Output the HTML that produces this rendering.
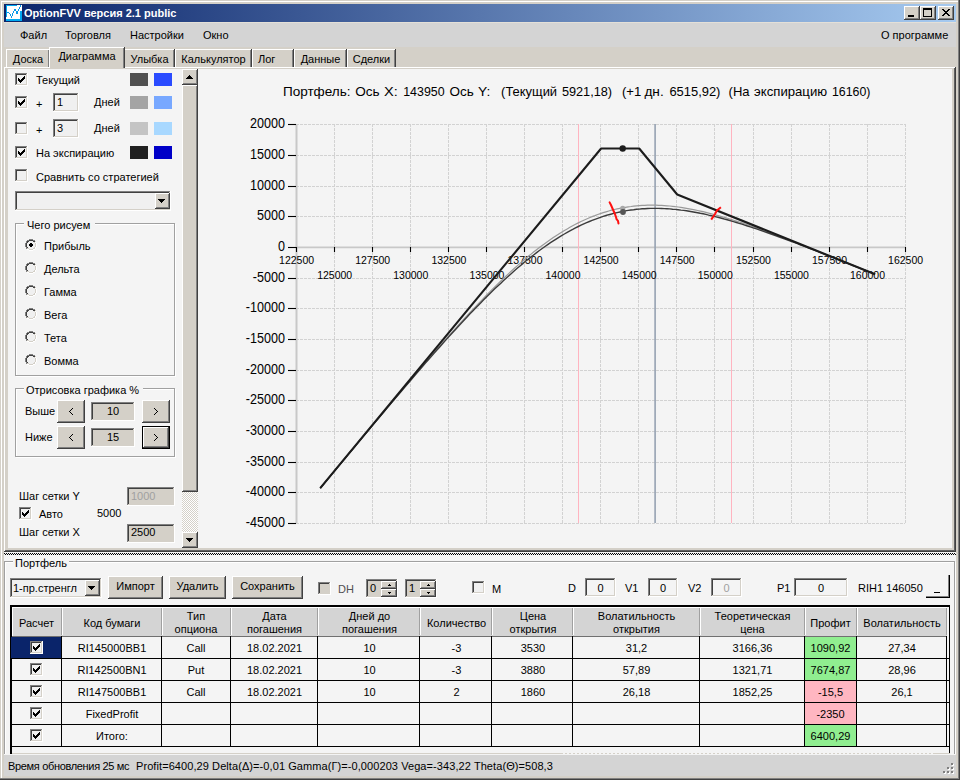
<!DOCTYPE html>
<html><head><meta charset="utf-8">
<style>
*{margin:0;padding:0;box-sizing:border-box}
html,body{width:960px;height:780px;overflow:hidden;background:#d4d0c8}
body{position:relative;font-family:"Liberation Sans",sans-serif;font-size:11px;color:#000;line-height:13px}
.a{position:absolute}
.t{position:absolute;white-space:nowrap}
.raised{background:#d4d0c8;box-shadow:inset -1px -1px #404040,inset 1px 1px #fff,inset -2px -2px #808080,inset 2px 2px #d4d0c8}
.sunken{box-shadow:inset -1px -1px #fff,inset 1px 1px #808080,inset -2px -2px #d4d0c8,inset 2px 2px #404040}
.cb{position:absolute;width:13px;height:13px;background:#f0f0f0;box-shadow:inset -1px -1px #fff,inset 1px 1px #808080,inset -2px -2px #d4d0c8,inset 2px 2px #404040}
.cb svg{position:absolute;left:3px;top:3px}
.rb{position:absolute;width:12px;height:12px}
.tab{position:absolute;top:49px;height:19px;background:#d4d0c8;border-top:1px solid #fff;border-left:1px solid #fff;box-shadow:inset -1px 0 #808080, 1px 0 #404040;text-align:center;line-height:18px}
.btn{position:absolute;text-align:center}
.grp{position:absolute;border:1px solid #a0a0a0;box-shadow:1px 1px #fff, inset 1px 1px #fff}
.lbl{position:absolute;background:#f4f4f4;padding:0 2px;white-space:nowrap}
table.g{position:absolute;border-collapse:collapse;table-layout:fixed}
table.g td{border:1px solid #000;height:22px;text-align:center;white-space:nowrap;overflow:hidden;padding:0}
</style></head><body>
<!-- window frame -->
<div class="a" style="left:1px;top:1px;width:958px;height:778px;border-top:1px solid #fff;border-left:1px solid #fff"></div>
<div class="a" style="left:958px;top:0;width:1px;height:779px;background:#808080"></div>
<div class="a" style="left:959px;top:0;width:1px;height:780px;background:#404040"></div>
<!-- title bar -->
<div class="a" style="left:4px;top:4px;width:952px;height:18px;background:linear-gradient(to right,#0a246a,#a6caf0)"></div>
<svg class="a" style="left:0;top:0" width="24" height="24" shape-rendering="crispEdges"><rect x="6" y="5" width="16" height="16" fill="#fff"/><rect x="6" y="5" width="11" height="1" fill="#00a8f0"/><rect x="6" y="5" width="1" height="12" fill="#00a8f0"/><rect x="6" y="19" width="16" height="2" fill="#00a8f0"/><rect x="20" y="11" width="2" height="10" fill="#00a8f0"/><rect x="7" y="12" width="2" height="1" fill="#0898e8"/><rect x="9" y="13" width="1" height="1" fill="#0898e8"/><rect x="10" y="14" width="1" height="2" fill="#0898e8"/><rect x="11" y="16" width="1" height="2" fill="#0898e8"/><rect x="12" y="13" width="1" height="3" fill="#0898e8"/><rect x="13" y="11" width="1" height="2" fill="#0898e8"/><rect x="14" y="9" width="2" height="2" fill="#0898e8"/><rect x="16" y="11" width="2" height="3" fill="#0898e8"/><rect x="18" y="9" width="1" height="2" fill="#0898e8"/><rect x="19" y="7" width="1" height="2" fill="#0898e8"/><rect x="20" y="5" width="1" height="2" fill="#0898e8"/></svg>
<div class="t" style="left:24px;top:6px;color:#fff;font-weight:bold;font-size:11px;line-height:14px">OptionFVV версия 2.1 public</div>
<div class="btn raised" style="left:904px;top:6px;width:16px;height:14px"><div class="a" style="left:4px;top:9px;width:6px;height:2px;background:#000"></div></div>
<div class="btn raised" style="left:920px;top:6px;width:16px;height:14px"><div class="a" style="left:3px;top:2px;width:9px;height:9px;border:1px solid #000;border-top-width:2px"></div></div>
<div class="btn raised" style="left:938px;top:6px;width:16px;height:14px"><svg class="a" style="left:4px;top:3px" width="8" height="7" shape-rendering="crispEdges" fill="#000"><rect x="0" y="0" width="1" height="1"/><rect x="1" y="0" width="1" height="1"/><rect x="6" y="0" width="1" height="1"/><rect x="7" y="0" width="1" height="1"/><rect x="1" y="1" width="1" height="1"/><rect x="2" y="1" width="1" height="1"/><rect x="5" y="1" width="1" height="1"/><rect x="6" y="1" width="1" height="1"/><rect x="2" y="2" width="1" height="1"/><rect x="3" y="2" width="1" height="1"/><rect x="4" y="2" width="1" height="1"/><rect x="5" y="2" width="1" height="1"/><rect x="3" y="3" width="1" height="1"/><rect x="4" y="3" width="1" height="1"/><rect x="2" y="4" width="1" height="1"/><rect x="3" y="4" width="1" height="1"/><rect x="4" y="4" width="1" height="1"/><rect x="5" y="4" width="1" height="1"/><rect x="1" y="5" width="1" height="1"/><rect x="2" y="5" width="1" height="1"/><rect x="5" y="5" width="1" height="1"/><rect x="6" y="5" width="1" height="1"/><rect x="0" y="6" width="1" height="1"/><rect x="1" y="6" width="1" height="1"/><rect x="6" y="6" width="1" height="1"/><rect x="7" y="6" width="1" height="1"/></svg></div>
<!-- menu -->
<div class="a" style="left:4px;top:22px;width:952px;height:1px;background:#e4e0d8"></div>
<div class="a" style="left:4px;top:23px;width:952px;height:24px;background:#d4d4d4"></div>
<div class="t" style="left:20px;top:29px">Файл</div>
<div class="t" style="left:65px;top:29px">Торговля</div>
<div class="t" style="left:130px;top:29px">Настройки</div>
<div class="t" style="left:203px;top:29px">Окно</div>
<div class="t" style="left:881px;top:29px">О программе</div>
<!-- tabs -->
<div class="tab" style="left:6px;width:43px">Доска</div>
<div class="tab" style="left:124px;width:50px">Улыбка</div>
<div class="tab" style="left:175px;width:76px">Калькулятор</div>
<div class="tab" style="left:252px;width:41px;text-align:left;padding-left:5px">Лог</div>
<div class="tab" style="left:294px;width:52px">Данные</div>
<div class="tab" style="left:347px;width:48px">Сделки</div>
<!-- tab panel -->
<div class="a" style="left:4px;top:67px;width:952px;height:485px;background:#f4f4f4;box-shadow:inset -1px -1px #404040,inset 1px 1px #fff,inset -2px -2px #606060,inset 2px 2px #d4d0c8,inset -4px -4px #d4d0c8,inset 4px 0 #d4d0c8"></div>
<div class="tab" style="left:49px;top:47px;width:75px;height:21px;z-index:2;line-height:17px;border-bottom:0">Диаграмма</div>

<!-- left panel -->


<!-- row 1 -->
<div class="cb" style="left:15px;top:73px"><svg width="7" height="7" shape-rendering="crispEdges"><path d="M6 0h1v1h-1zM5 1h2v1h-2zM0 2h1v1h-1zM4 2h3v1h-3zM0 3h2v1h-2zM3 3h3v1h-3zM0 4h5v1h-5zM1 5h3v1h-3zM2 6h1v1h-1z" fill="#000"/></svg></div>
<div class="t" style="left:36px;top:74px">Текущий</div>
<div class="a" style="left:130px;top:73px;width:18px;height:13px;background:#505050"></div>
<div class="a" style="left:154px;top:73px;width:18px;height:13px;background:#2a4bff"></div>
<!-- row 2 -->
<div class="cb" style="left:15px;top:96px"><svg width="7" height="7" shape-rendering="crispEdges"><path d="M6 0h1v1h-1zM5 1h2v1h-2zM0 2h1v1h-1zM4 2h3v1h-3zM0 3h2v1h-2zM3 3h3v1h-3zM0 4h5v1h-5zM1 5h3v1h-3zM2 6h1v1h-1z" fill="#000"/></svg></div>
<div class="t" style="left:36px;top:98px">+</div>
<div class="a sunken" style="left:53px;top:93px;width:26px;height:19px;background:#f0f0f0"></div>
<div class="t" style="left:57px;top:96px">1</div>
<div class="t" style="left:94px;top:96px">Дней</div>
<div class="a" style="left:130px;top:96px;width:18px;height:13px;background:#a4a4a4"></div>
<div class="a" style="left:154px;top:96px;width:18px;height:13px;background:#78a8ff"></div>
<!-- row 3 -->
<div class="cb" style="left:15px;top:122px"></div>
<div class="t" style="left:36px;top:124px">+</div>
<div class="a sunken" style="left:53px;top:119px;width:26px;height:19px;background:#f0f0f0"></div>
<div class="t" style="left:57px;top:122px">3</div>
<div class="t" style="left:94px;top:122px">Дней</div>
<div class="a" style="left:130px;top:122px;width:18px;height:13px;background:#c4c4c4"></div>
<div class="a" style="left:154px;top:122px;width:18px;height:13px;background:#a8d8ff"></div>
<!-- row 4 -->
<div class="cb" style="left:15px;top:146px"><svg width="7" height="7" shape-rendering="crispEdges"><path d="M6 0h1v1h-1zM5 1h2v1h-2zM0 2h1v1h-1zM4 2h3v1h-3zM0 3h2v1h-2zM3 3h3v1h-3zM0 4h5v1h-5zM1 5h3v1h-3zM2 6h1v1h-1z" fill="#000"/></svg></div>
<div class="t" style="left:36px;top:147px">На экспирацию</div>
<div class="a" style="left:130px;top:146px;width:18px;height:13px;background:#202020"></div>
<div class="a" style="left:154px;top:146px;width:18px;height:13px;background:#0000c8"></div>
<!-- row 5 -->
<div class="cb" style="left:15px;top:169px"></div>
<div class="t" style="left:36px;top:171px">Сравнить со стратегией</div>
<!-- combo -->
<div class="a sunken" style="left:15px;top:191px;width:156px;height:20px;background:#f0f0f0"></div>
<div class="a raised" style="left:154px;top:193px;width:15px;height:16px;left:155px"><svg class="a" style="left:3px;top:6px" width="7" height="4" shape-rendering="crispEdges"><path d="M0 0h7v1h-7zM1 1h5v1h-5zM2 2h3v1h-3zM3 3h1v1h-1z" fill="#000"/></svg></div>
<!-- group chego risuem -->
<div class="grp" style="left:15px;top:223px;width:160px;height:153px"></div>
<div class="lbl" style="left:24px;top:219px;padding:0 5px 0 3px">Чего рисуем</div>
<svg class="rb" style="left:25px;top:239px" width="12" height="12" shape-rendering="crispEdges"><rect x="4" y="0" width="1" height="1" fill="#808080"/><rect x="5" y="0" width="1" height="1" fill="#808080"/><rect x="6" y="0" width="1" height="1" fill="#808080"/><rect x="7" y="0" width="1" height="1" fill="#808080"/><rect x="2" y="1" width="1" height="1" fill="#808080"/><rect x="3" y="1" width="1" height="1" fill="#808080"/><rect x="4" y="1" width="1" height="1" fill="#404040"/><rect x="5" y="1" width="1" height="1" fill="#404040"/><rect x="6" y="1" width="1" height="1" fill="#404040"/><rect x="7" y="1" width="1" height="1" fill="#404040"/><rect x="8" y="1" width="1" height="1" fill="#808080"/><rect x="9" y="1" width="1" height="1" fill="#808080"/><rect x="4" y="2" width="1" height="1" fill="#f0f0f0"/><rect x="5" y="2" width="1" height="1" fill="#f0f0f0"/><rect x="6" y="2" width="1" height="1" fill="#f0f0f0"/><rect x="7" y="2" width="1" height="1" fill="#f0f0f0"/><rect x="1" y="2" width="1" height="1" fill="#808080"/><rect x="2" y="2" width="1" height="1" fill="#404040"/><rect x="3" y="2" width="1" height="1" fill="#404040"/><rect x="8" y="2" width="1" height="1" fill="#404040"/><rect x="9" y="2" width="1" height="1" fill="#404040"/><rect x="10" y="2" width="1" height="1" fill="#d4d0c8"/><rect x="3" y="3" width="1" height="1" fill="#f0f0f0"/><rect x="4" y="3" width="1" height="1" fill="#f0f0f0"/><rect x="5" y="3" width="1" height="1" fill="#f0f0f0"/><rect x="6" y="3" width="1" height="1" fill="#f0f0f0"/><rect x="7" y="3" width="1" height="1" fill="#f0f0f0"/><rect x="8" y="3" width="1" height="1" fill="#f0f0f0"/><rect x="1" y="3" width="1" height="1" fill="#808080"/><rect x="2" y="3" width="1" height="1" fill="#404040"/><rect x="9" y="3" width="1" height="1" fill="#d4d0c8"/><rect x="10" y="3" width="1" height="1" fill="#ffffff"/><rect x="2" y="4" width="1" height="1" fill="#f0f0f0"/><rect x="3" y="4" width="1" height="1" fill="#f0f0f0"/><rect x="4" y="4" width="1" height="1" fill="#f0f0f0"/><rect x="5" y="4" width="1" height="1" fill="#f0f0f0"/><rect x="6" y="4" width="1" height="1" fill="#f0f0f0"/><rect x="7" y="4" width="1" height="1" fill="#f0f0f0"/><rect x="8" y="4" width="1" height="1" fill="#f0f0f0"/><rect x="9" y="4" width="1" height="1" fill="#f0f0f0"/><rect x="0" y="4" width="1" height="1" fill="#808080"/><rect x="1" y="4" width="1" height="1" fill="#404040"/><rect x="10" y="4" width="1" height="1" fill="#d4d0c8"/><rect x="11" y="4" width="1" height="1" fill="#ffffff"/><rect x="2" y="5" width="1" height="1" fill="#f0f0f0"/><rect x="3" y="5" width="1" height="1" fill="#f0f0f0"/><rect x="4" y="5" width="1" height="1" fill="#f0f0f0"/><rect x="5" y="5" width="1" height="1" fill="#f0f0f0"/><rect x="6" y="5" width="1" height="1" fill="#f0f0f0"/><rect x="7" y="5" width="1" height="1" fill="#f0f0f0"/><rect x="8" y="5" width="1" height="1" fill="#f0f0f0"/><rect x="9" y="5" width="1" height="1" fill="#f0f0f0"/><rect x="0" y="5" width="1" height="1" fill="#808080"/><rect x="1" y="5" width="1" height="1" fill="#404040"/><rect x="10" y="5" width="1" height="1" fill="#d4d0c8"/><rect x="11" y="5" width="1" height="1" fill="#ffffff"/><rect x="2" y="6" width="1" height="1" fill="#f0f0f0"/><rect x="3" y="6" width="1" height="1" fill="#f0f0f0"/><rect x="4" y="6" width="1" height="1" fill="#f0f0f0"/><rect x="5" y="6" width="1" height="1" fill="#f0f0f0"/><rect x="6" y="6" width="1" height="1" fill="#f0f0f0"/><rect x="7" y="6" width="1" height="1" fill="#f0f0f0"/><rect x="8" y="6" width="1" height="1" fill="#f0f0f0"/><rect x="9" y="6" width="1" height="1" fill="#f0f0f0"/><rect x="0" y="6" width="1" height="1" fill="#808080"/><rect x="1" y="6" width="1" height="1" fill="#404040"/><rect x="10" y="6" width="1" height="1" fill="#d4d0c8"/><rect x="11" y="6" width="1" height="1" fill="#ffffff"/><rect x="2" y="7" width="1" height="1" fill="#f0f0f0"/><rect x="3" y="7" width="1" height="1" fill="#f0f0f0"/><rect x="4" y="7" width="1" height="1" fill="#f0f0f0"/><rect x="5" y="7" width="1" height="1" fill="#f0f0f0"/><rect x="6" y="7" width="1" height="1" fill="#f0f0f0"/><rect x="7" y="7" width="1" height="1" fill="#f0f0f0"/><rect x="8" y="7" width="1" height="1" fill="#f0f0f0"/><rect x="9" y="7" width="1" height="1" fill="#f0f0f0"/><rect x="0" y="7" width="1" height="1" fill="#808080"/><rect x="1" y="7" width="1" height="1" fill="#404040"/><rect x="10" y="7" width="1" height="1" fill="#d4d0c8"/><rect x="11" y="7" width="1" height="1" fill="#ffffff"/><rect x="3" y="8" width="1" height="1" fill="#f0f0f0"/><rect x="4" y="8" width="1" height="1" fill="#f0f0f0"/><rect x="5" y="8" width="1" height="1" fill="#f0f0f0"/><rect x="6" y="8" width="1" height="1" fill="#f0f0f0"/><rect x="7" y="8" width="1" height="1" fill="#f0f0f0"/><rect x="8" y="8" width="1" height="1" fill="#f0f0f0"/><rect x="1" y="8" width="1" height="1" fill="#808080"/><rect x="2" y="8" width="1" height="1" fill="#404040"/><rect x="9" y="8" width="1" height="1" fill="#d4d0c8"/><rect x="10" y="8" width="1" height="1" fill="#ffffff"/><rect x="4" y="9" width="1" height="1" fill="#f0f0f0"/><rect x="5" y="9" width="1" height="1" fill="#f0f0f0"/><rect x="6" y="9" width="1" height="1" fill="#f0f0f0"/><rect x="7" y="9" width="1" height="1" fill="#f0f0f0"/><rect x="1" y="9" width="1" height="1" fill="#808080"/><rect x="2" y="9" width="1" height="1" fill="#d4d0c8"/><rect x="3" y="9" width="1" height="1" fill="#d4d0c8"/><rect x="8" y="9" width="1" height="1" fill="#d4d0c8"/><rect x="9" y="9" width="1" height="1" fill="#d4d0c8"/><rect x="10" y="9" width="1" height="1" fill="#ffffff"/><rect x="2" y="10" width="1" height="1" fill="#ffffff"/><rect x="3" y="10" width="1" height="1" fill="#ffffff"/><rect x="4" y="10" width="1" height="1" fill="#d4d0c8"/><rect x="5" y="10" width="1" height="1" fill="#d4d0c8"/><rect x="6" y="10" width="1" height="1" fill="#d4d0c8"/><rect x="7" y="10" width="1" height="1" fill="#d4d0c8"/><rect x="8" y="10" width="1" height="1" fill="#ffffff"/><rect x="9" y="10" width="1" height="1" fill="#ffffff"/><rect x="4" y="11" width="1" height="1" fill="#ffffff"/><rect x="5" y="11" width="1" height="1" fill="#ffffff"/><rect x="6" y="11" width="1" height="1" fill="#ffffff"/><rect x="7" y="11" width="1" height="1" fill="#ffffff"/><rect x="5" y="4" width="2" height="1" fill="#000"/><rect x="4" y="5" width="4" height="1" fill="#000"/><rect x="4" y="6" width="4" height="1" fill="#000"/><rect x="5" y="7" width="2" height="1" fill="#000"/></svg>
<div class="t" style="left:44px;top:240px">Прибыль</div>
<svg class="rb" style="left:25px;top:262px" width="12" height="12" shape-rendering="crispEdges"><rect x="4" y="0" width="1" height="1" fill="#808080"/><rect x="5" y="0" width="1" height="1" fill="#808080"/><rect x="6" y="0" width="1" height="1" fill="#808080"/><rect x="7" y="0" width="1" height="1" fill="#808080"/><rect x="2" y="1" width="1" height="1" fill="#808080"/><rect x="3" y="1" width="1" height="1" fill="#808080"/><rect x="4" y="1" width="1" height="1" fill="#404040"/><rect x="5" y="1" width="1" height="1" fill="#404040"/><rect x="6" y="1" width="1" height="1" fill="#404040"/><rect x="7" y="1" width="1" height="1" fill="#404040"/><rect x="8" y="1" width="1" height="1" fill="#808080"/><rect x="9" y="1" width="1" height="1" fill="#808080"/><rect x="4" y="2" width="1" height="1" fill="#f0f0f0"/><rect x="5" y="2" width="1" height="1" fill="#f0f0f0"/><rect x="6" y="2" width="1" height="1" fill="#f0f0f0"/><rect x="7" y="2" width="1" height="1" fill="#f0f0f0"/><rect x="1" y="2" width="1" height="1" fill="#808080"/><rect x="2" y="2" width="1" height="1" fill="#404040"/><rect x="3" y="2" width="1" height="1" fill="#404040"/><rect x="8" y="2" width="1" height="1" fill="#404040"/><rect x="9" y="2" width="1" height="1" fill="#404040"/><rect x="10" y="2" width="1" height="1" fill="#d4d0c8"/><rect x="3" y="3" width="1" height="1" fill="#f0f0f0"/><rect x="4" y="3" width="1" height="1" fill="#f0f0f0"/><rect x="5" y="3" width="1" height="1" fill="#f0f0f0"/><rect x="6" y="3" width="1" height="1" fill="#f0f0f0"/><rect x="7" y="3" width="1" height="1" fill="#f0f0f0"/><rect x="8" y="3" width="1" height="1" fill="#f0f0f0"/><rect x="1" y="3" width="1" height="1" fill="#808080"/><rect x="2" y="3" width="1" height="1" fill="#404040"/><rect x="9" y="3" width="1" height="1" fill="#d4d0c8"/><rect x="10" y="3" width="1" height="1" fill="#ffffff"/><rect x="2" y="4" width="1" height="1" fill="#f0f0f0"/><rect x="3" y="4" width="1" height="1" fill="#f0f0f0"/><rect x="4" y="4" width="1" height="1" fill="#f0f0f0"/><rect x="5" y="4" width="1" height="1" fill="#f0f0f0"/><rect x="6" y="4" width="1" height="1" fill="#f0f0f0"/><rect x="7" y="4" width="1" height="1" fill="#f0f0f0"/><rect x="8" y="4" width="1" height="1" fill="#f0f0f0"/><rect x="9" y="4" width="1" height="1" fill="#f0f0f0"/><rect x="0" y="4" width="1" height="1" fill="#808080"/><rect x="1" y="4" width="1" height="1" fill="#404040"/><rect x="10" y="4" width="1" height="1" fill="#d4d0c8"/><rect x="11" y="4" width="1" height="1" fill="#ffffff"/><rect x="2" y="5" width="1" height="1" fill="#f0f0f0"/><rect x="3" y="5" width="1" height="1" fill="#f0f0f0"/><rect x="4" y="5" width="1" height="1" fill="#f0f0f0"/><rect x="5" y="5" width="1" height="1" fill="#f0f0f0"/><rect x="6" y="5" width="1" height="1" fill="#f0f0f0"/><rect x="7" y="5" width="1" height="1" fill="#f0f0f0"/><rect x="8" y="5" width="1" height="1" fill="#f0f0f0"/><rect x="9" y="5" width="1" height="1" fill="#f0f0f0"/><rect x="0" y="5" width="1" height="1" fill="#808080"/><rect x="1" y="5" width="1" height="1" fill="#404040"/><rect x="10" y="5" width="1" height="1" fill="#d4d0c8"/><rect x="11" y="5" width="1" height="1" fill="#ffffff"/><rect x="2" y="6" width="1" height="1" fill="#f0f0f0"/><rect x="3" y="6" width="1" height="1" fill="#f0f0f0"/><rect x="4" y="6" width="1" height="1" fill="#f0f0f0"/><rect x="5" y="6" width="1" height="1" fill="#f0f0f0"/><rect x="6" y="6" width="1" height="1" fill="#f0f0f0"/><rect x="7" y="6" width="1" height="1" fill="#f0f0f0"/><rect x="8" y="6" width="1" height="1" fill="#f0f0f0"/><rect x="9" y="6" width="1" height="1" fill="#f0f0f0"/><rect x="0" y="6" width="1" height="1" fill="#808080"/><rect x="1" y="6" width="1" height="1" fill="#404040"/><rect x="10" y="6" width="1" height="1" fill="#d4d0c8"/><rect x="11" y="6" width="1" height="1" fill="#ffffff"/><rect x="2" y="7" width="1" height="1" fill="#f0f0f0"/><rect x="3" y="7" width="1" height="1" fill="#f0f0f0"/><rect x="4" y="7" width="1" height="1" fill="#f0f0f0"/><rect x="5" y="7" width="1" height="1" fill="#f0f0f0"/><rect x="6" y="7" width="1" height="1" fill="#f0f0f0"/><rect x="7" y="7" width="1" height="1" fill="#f0f0f0"/><rect x="8" y="7" width="1" height="1" fill="#f0f0f0"/><rect x="9" y="7" width="1" height="1" fill="#f0f0f0"/><rect x="0" y="7" width="1" height="1" fill="#808080"/><rect x="1" y="7" width="1" height="1" fill="#404040"/><rect x="10" y="7" width="1" height="1" fill="#d4d0c8"/><rect x="11" y="7" width="1" height="1" fill="#ffffff"/><rect x="3" y="8" width="1" height="1" fill="#f0f0f0"/><rect x="4" y="8" width="1" height="1" fill="#f0f0f0"/><rect x="5" y="8" width="1" height="1" fill="#f0f0f0"/><rect x="6" y="8" width="1" height="1" fill="#f0f0f0"/><rect x="7" y="8" width="1" height="1" fill="#f0f0f0"/><rect x="8" y="8" width="1" height="1" fill="#f0f0f0"/><rect x="1" y="8" width="1" height="1" fill="#808080"/><rect x="2" y="8" width="1" height="1" fill="#404040"/><rect x="9" y="8" width="1" height="1" fill="#d4d0c8"/><rect x="10" y="8" width="1" height="1" fill="#ffffff"/><rect x="4" y="9" width="1" height="1" fill="#f0f0f0"/><rect x="5" y="9" width="1" height="1" fill="#f0f0f0"/><rect x="6" y="9" width="1" height="1" fill="#f0f0f0"/><rect x="7" y="9" width="1" height="1" fill="#f0f0f0"/><rect x="1" y="9" width="1" height="1" fill="#808080"/><rect x="2" y="9" width="1" height="1" fill="#d4d0c8"/><rect x="3" y="9" width="1" height="1" fill="#d4d0c8"/><rect x="8" y="9" width="1" height="1" fill="#d4d0c8"/><rect x="9" y="9" width="1" height="1" fill="#d4d0c8"/><rect x="10" y="9" width="1" height="1" fill="#ffffff"/><rect x="2" y="10" width="1" height="1" fill="#ffffff"/><rect x="3" y="10" width="1" height="1" fill="#ffffff"/><rect x="4" y="10" width="1" height="1" fill="#d4d0c8"/><rect x="5" y="10" width="1" height="1" fill="#d4d0c8"/><rect x="6" y="10" width="1" height="1" fill="#d4d0c8"/><rect x="7" y="10" width="1" height="1" fill="#d4d0c8"/><rect x="8" y="10" width="1" height="1" fill="#ffffff"/><rect x="9" y="10" width="1" height="1" fill="#ffffff"/><rect x="4" y="11" width="1" height="1" fill="#ffffff"/><rect x="5" y="11" width="1" height="1" fill="#ffffff"/><rect x="6" y="11" width="1" height="1" fill="#ffffff"/><rect x="7" y="11" width="1" height="1" fill="#ffffff"/></svg>
<div class="t" style="left:44px;top:263px">Дельта</div>
<svg class="rb" style="left:25px;top:285px" width="12" height="12" shape-rendering="crispEdges"><rect x="4" y="0" width="1" height="1" fill="#808080"/><rect x="5" y="0" width="1" height="1" fill="#808080"/><rect x="6" y="0" width="1" height="1" fill="#808080"/><rect x="7" y="0" width="1" height="1" fill="#808080"/><rect x="2" y="1" width="1" height="1" fill="#808080"/><rect x="3" y="1" width="1" height="1" fill="#808080"/><rect x="4" y="1" width="1" height="1" fill="#404040"/><rect x="5" y="1" width="1" height="1" fill="#404040"/><rect x="6" y="1" width="1" height="1" fill="#404040"/><rect x="7" y="1" width="1" height="1" fill="#404040"/><rect x="8" y="1" width="1" height="1" fill="#808080"/><rect x="9" y="1" width="1" height="1" fill="#808080"/><rect x="4" y="2" width="1" height="1" fill="#f0f0f0"/><rect x="5" y="2" width="1" height="1" fill="#f0f0f0"/><rect x="6" y="2" width="1" height="1" fill="#f0f0f0"/><rect x="7" y="2" width="1" height="1" fill="#f0f0f0"/><rect x="1" y="2" width="1" height="1" fill="#808080"/><rect x="2" y="2" width="1" height="1" fill="#404040"/><rect x="3" y="2" width="1" height="1" fill="#404040"/><rect x="8" y="2" width="1" height="1" fill="#404040"/><rect x="9" y="2" width="1" height="1" fill="#404040"/><rect x="10" y="2" width="1" height="1" fill="#d4d0c8"/><rect x="3" y="3" width="1" height="1" fill="#f0f0f0"/><rect x="4" y="3" width="1" height="1" fill="#f0f0f0"/><rect x="5" y="3" width="1" height="1" fill="#f0f0f0"/><rect x="6" y="3" width="1" height="1" fill="#f0f0f0"/><rect x="7" y="3" width="1" height="1" fill="#f0f0f0"/><rect x="8" y="3" width="1" height="1" fill="#f0f0f0"/><rect x="1" y="3" width="1" height="1" fill="#808080"/><rect x="2" y="3" width="1" height="1" fill="#404040"/><rect x="9" y="3" width="1" height="1" fill="#d4d0c8"/><rect x="10" y="3" width="1" height="1" fill="#ffffff"/><rect x="2" y="4" width="1" height="1" fill="#f0f0f0"/><rect x="3" y="4" width="1" height="1" fill="#f0f0f0"/><rect x="4" y="4" width="1" height="1" fill="#f0f0f0"/><rect x="5" y="4" width="1" height="1" fill="#f0f0f0"/><rect x="6" y="4" width="1" height="1" fill="#f0f0f0"/><rect x="7" y="4" width="1" height="1" fill="#f0f0f0"/><rect x="8" y="4" width="1" height="1" fill="#f0f0f0"/><rect x="9" y="4" width="1" height="1" fill="#f0f0f0"/><rect x="0" y="4" width="1" height="1" fill="#808080"/><rect x="1" y="4" width="1" height="1" fill="#404040"/><rect x="10" y="4" width="1" height="1" fill="#d4d0c8"/><rect x="11" y="4" width="1" height="1" fill="#ffffff"/><rect x="2" y="5" width="1" height="1" fill="#f0f0f0"/><rect x="3" y="5" width="1" height="1" fill="#f0f0f0"/><rect x="4" y="5" width="1" height="1" fill="#f0f0f0"/><rect x="5" y="5" width="1" height="1" fill="#f0f0f0"/><rect x="6" y="5" width="1" height="1" fill="#f0f0f0"/><rect x="7" y="5" width="1" height="1" fill="#f0f0f0"/><rect x="8" y="5" width="1" height="1" fill="#f0f0f0"/><rect x="9" y="5" width="1" height="1" fill="#f0f0f0"/><rect x="0" y="5" width="1" height="1" fill="#808080"/><rect x="1" y="5" width="1" height="1" fill="#404040"/><rect x="10" y="5" width="1" height="1" fill="#d4d0c8"/><rect x="11" y="5" width="1" height="1" fill="#ffffff"/><rect x="2" y="6" width="1" height="1" fill="#f0f0f0"/><rect x="3" y="6" width="1" height="1" fill="#f0f0f0"/><rect x="4" y="6" width="1" height="1" fill="#f0f0f0"/><rect x="5" y="6" width="1" height="1" fill="#f0f0f0"/><rect x="6" y="6" width="1" height="1" fill="#f0f0f0"/><rect x="7" y="6" width="1" height="1" fill="#f0f0f0"/><rect x="8" y="6" width="1" height="1" fill="#f0f0f0"/><rect x="9" y="6" width="1" height="1" fill="#f0f0f0"/><rect x="0" y="6" width="1" height="1" fill="#808080"/><rect x="1" y="6" width="1" height="1" fill="#404040"/><rect x="10" y="6" width="1" height="1" fill="#d4d0c8"/><rect x="11" y="6" width="1" height="1" fill="#ffffff"/><rect x="2" y="7" width="1" height="1" fill="#f0f0f0"/><rect x="3" y="7" width="1" height="1" fill="#f0f0f0"/><rect x="4" y="7" width="1" height="1" fill="#f0f0f0"/><rect x="5" y="7" width="1" height="1" fill="#f0f0f0"/><rect x="6" y="7" width="1" height="1" fill="#f0f0f0"/><rect x="7" y="7" width="1" height="1" fill="#f0f0f0"/><rect x="8" y="7" width="1" height="1" fill="#f0f0f0"/><rect x="9" y="7" width="1" height="1" fill="#f0f0f0"/><rect x="0" y="7" width="1" height="1" fill="#808080"/><rect x="1" y="7" width="1" height="1" fill="#404040"/><rect x="10" y="7" width="1" height="1" fill="#d4d0c8"/><rect x="11" y="7" width="1" height="1" fill="#ffffff"/><rect x="3" y="8" width="1" height="1" fill="#f0f0f0"/><rect x="4" y="8" width="1" height="1" fill="#f0f0f0"/><rect x="5" y="8" width="1" height="1" fill="#f0f0f0"/><rect x="6" y="8" width="1" height="1" fill="#f0f0f0"/><rect x="7" y="8" width="1" height="1" fill="#f0f0f0"/><rect x="8" y="8" width="1" height="1" fill="#f0f0f0"/><rect x="1" y="8" width="1" height="1" fill="#808080"/><rect x="2" y="8" width="1" height="1" fill="#404040"/><rect x="9" y="8" width="1" height="1" fill="#d4d0c8"/><rect x="10" y="8" width="1" height="1" fill="#ffffff"/><rect x="4" y="9" width="1" height="1" fill="#f0f0f0"/><rect x="5" y="9" width="1" height="1" fill="#f0f0f0"/><rect x="6" y="9" width="1" height="1" fill="#f0f0f0"/><rect x="7" y="9" width="1" height="1" fill="#f0f0f0"/><rect x="1" y="9" width="1" height="1" fill="#808080"/><rect x="2" y="9" width="1" height="1" fill="#d4d0c8"/><rect x="3" y="9" width="1" height="1" fill="#d4d0c8"/><rect x="8" y="9" width="1" height="1" fill="#d4d0c8"/><rect x="9" y="9" width="1" height="1" fill="#d4d0c8"/><rect x="10" y="9" width="1" height="1" fill="#ffffff"/><rect x="2" y="10" width="1" height="1" fill="#ffffff"/><rect x="3" y="10" width="1" height="1" fill="#ffffff"/><rect x="4" y="10" width="1" height="1" fill="#d4d0c8"/><rect x="5" y="10" width="1" height="1" fill="#d4d0c8"/><rect x="6" y="10" width="1" height="1" fill="#d4d0c8"/><rect x="7" y="10" width="1" height="1" fill="#d4d0c8"/><rect x="8" y="10" width="1" height="1" fill="#ffffff"/><rect x="9" y="10" width="1" height="1" fill="#ffffff"/><rect x="4" y="11" width="1" height="1" fill="#ffffff"/><rect x="5" y="11" width="1" height="1" fill="#ffffff"/><rect x="6" y="11" width="1" height="1" fill="#ffffff"/><rect x="7" y="11" width="1" height="1" fill="#ffffff"/></svg>
<div class="t" style="left:44px;top:286px">Гамма</div>
<svg class="rb" style="left:25px;top:308px" width="12" height="12" shape-rendering="crispEdges"><rect x="4" y="0" width="1" height="1" fill="#808080"/><rect x="5" y="0" width="1" height="1" fill="#808080"/><rect x="6" y="0" width="1" height="1" fill="#808080"/><rect x="7" y="0" width="1" height="1" fill="#808080"/><rect x="2" y="1" width="1" height="1" fill="#808080"/><rect x="3" y="1" width="1" height="1" fill="#808080"/><rect x="4" y="1" width="1" height="1" fill="#404040"/><rect x="5" y="1" width="1" height="1" fill="#404040"/><rect x="6" y="1" width="1" height="1" fill="#404040"/><rect x="7" y="1" width="1" height="1" fill="#404040"/><rect x="8" y="1" width="1" height="1" fill="#808080"/><rect x="9" y="1" width="1" height="1" fill="#808080"/><rect x="4" y="2" width="1" height="1" fill="#f0f0f0"/><rect x="5" y="2" width="1" height="1" fill="#f0f0f0"/><rect x="6" y="2" width="1" height="1" fill="#f0f0f0"/><rect x="7" y="2" width="1" height="1" fill="#f0f0f0"/><rect x="1" y="2" width="1" height="1" fill="#808080"/><rect x="2" y="2" width="1" height="1" fill="#404040"/><rect x="3" y="2" width="1" height="1" fill="#404040"/><rect x="8" y="2" width="1" height="1" fill="#404040"/><rect x="9" y="2" width="1" height="1" fill="#404040"/><rect x="10" y="2" width="1" height="1" fill="#d4d0c8"/><rect x="3" y="3" width="1" height="1" fill="#f0f0f0"/><rect x="4" y="3" width="1" height="1" fill="#f0f0f0"/><rect x="5" y="3" width="1" height="1" fill="#f0f0f0"/><rect x="6" y="3" width="1" height="1" fill="#f0f0f0"/><rect x="7" y="3" width="1" height="1" fill="#f0f0f0"/><rect x="8" y="3" width="1" height="1" fill="#f0f0f0"/><rect x="1" y="3" width="1" height="1" fill="#808080"/><rect x="2" y="3" width="1" height="1" fill="#404040"/><rect x="9" y="3" width="1" height="1" fill="#d4d0c8"/><rect x="10" y="3" width="1" height="1" fill="#ffffff"/><rect x="2" y="4" width="1" height="1" fill="#f0f0f0"/><rect x="3" y="4" width="1" height="1" fill="#f0f0f0"/><rect x="4" y="4" width="1" height="1" fill="#f0f0f0"/><rect x="5" y="4" width="1" height="1" fill="#f0f0f0"/><rect x="6" y="4" width="1" height="1" fill="#f0f0f0"/><rect x="7" y="4" width="1" height="1" fill="#f0f0f0"/><rect x="8" y="4" width="1" height="1" fill="#f0f0f0"/><rect x="9" y="4" width="1" height="1" fill="#f0f0f0"/><rect x="0" y="4" width="1" height="1" fill="#808080"/><rect x="1" y="4" width="1" height="1" fill="#404040"/><rect x="10" y="4" width="1" height="1" fill="#d4d0c8"/><rect x="11" y="4" width="1" height="1" fill="#ffffff"/><rect x="2" y="5" width="1" height="1" fill="#f0f0f0"/><rect x="3" y="5" width="1" height="1" fill="#f0f0f0"/><rect x="4" y="5" width="1" height="1" fill="#f0f0f0"/><rect x="5" y="5" width="1" height="1" fill="#f0f0f0"/><rect x="6" y="5" width="1" height="1" fill="#f0f0f0"/><rect x="7" y="5" width="1" height="1" fill="#f0f0f0"/><rect x="8" y="5" width="1" height="1" fill="#f0f0f0"/><rect x="9" y="5" width="1" height="1" fill="#f0f0f0"/><rect x="0" y="5" width="1" height="1" fill="#808080"/><rect x="1" y="5" width="1" height="1" fill="#404040"/><rect x="10" y="5" width="1" height="1" fill="#d4d0c8"/><rect x="11" y="5" width="1" height="1" fill="#ffffff"/><rect x="2" y="6" width="1" height="1" fill="#f0f0f0"/><rect x="3" y="6" width="1" height="1" fill="#f0f0f0"/><rect x="4" y="6" width="1" height="1" fill="#f0f0f0"/><rect x="5" y="6" width="1" height="1" fill="#f0f0f0"/><rect x="6" y="6" width="1" height="1" fill="#f0f0f0"/><rect x="7" y="6" width="1" height="1" fill="#f0f0f0"/><rect x="8" y="6" width="1" height="1" fill="#f0f0f0"/><rect x="9" y="6" width="1" height="1" fill="#f0f0f0"/><rect x="0" y="6" width="1" height="1" fill="#808080"/><rect x="1" y="6" width="1" height="1" fill="#404040"/><rect x="10" y="6" width="1" height="1" fill="#d4d0c8"/><rect x="11" y="6" width="1" height="1" fill="#ffffff"/><rect x="2" y="7" width="1" height="1" fill="#f0f0f0"/><rect x="3" y="7" width="1" height="1" fill="#f0f0f0"/><rect x="4" y="7" width="1" height="1" fill="#f0f0f0"/><rect x="5" y="7" width="1" height="1" fill="#f0f0f0"/><rect x="6" y="7" width="1" height="1" fill="#f0f0f0"/><rect x="7" y="7" width="1" height="1" fill="#f0f0f0"/><rect x="8" y="7" width="1" height="1" fill="#f0f0f0"/><rect x="9" y="7" width="1" height="1" fill="#f0f0f0"/><rect x="0" y="7" width="1" height="1" fill="#808080"/><rect x="1" y="7" width="1" height="1" fill="#404040"/><rect x="10" y="7" width="1" height="1" fill="#d4d0c8"/><rect x="11" y="7" width="1" height="1" fill="#ffffff"/><rect x="3" y="8" width="1" height="1" fill="#f0f0f0"/><rect x="4" y="8" width="1" height="1" fill="#f0f0f0"/><rect x="5" y="8" width="1" height="1" fill="#f0f0f0"/><rect x="6" y="8" width="1" height="1" fill="#f0f0f0"/><rect x="7" y="8" width="1" height="1" fill="#f0f0f0"/><rect x="8" y="8" width="1" height="1" fill="#f0f0f0"/><rect x="1" y="8" width="1" height="1" fill="#808080"/><rect x="2" y="8" width="1" height="1" fill="#404040"/><rect x="9" y="8" width="1" height="1" fill="#d4d0c8"/><rect x="10" y="8" width="1" height="1" fill="#ffffff"/><rect x="4" y="9" width="1" height="1" fill="#f0f0f0"/><rect x="5" y="9" width="1" height="1" fill="#f0f0f0"/><rect x="6" y="9" width="1" height="1" fill="#f0f0f0"/><rect x="7" y="9" width="1" height="1" fill="#f0f0f0"/><rect x="1" y="9" width="1" height="1" fill="#808080"/><rect x="2" y="9" width="1" height="1" fill="#d4d0c8"/><rect x="3" y="9" width="1" height="1" fill="#d4d0c8"/><rect x="8" y="9" width="1" height="1" fill="#d4d0c8"/><rect x="9" y="9" width="1" height="1" fill="#d4d0c8"/><rect x="10" y="9" width="1" height="1" fill="#ffffff"/><rect x="2" y="10" width="1" height="1" fill="#ffffff"/><rect x="3" y="10" width="1" height="1" fill="#ffffff"/><rect x="4" y="10" width="1" height="1" fill="#d4d0c8"/><rect x="5" y="10" width="1" height="1" fill="#d4d0c8"/><rect x="6" y="10" width="1" height="1" fill="#d4d0c8"/><rect x="7" y="10" width="1" height="1" fill="#d4d0c8"/><rect x="8" y="10" width="1" height="1" fill="#ffffff"/><rect x="9" y="10" width="1" height="1" fill="#ffffff"/><rect x="4" y="11" width="1" height="1" fill="#ffffff"/><rect x="5" y="11" width="1" height="1" fill="#ffffff"/><rect x="6" y="11" width="1" height="1" fill="#ffffff"/><rect x="7" y="11" width="1" height="1" fill="#ffffff"/></svg>
<div class="t" style="left:44px;top:309px">Вега</div>
<svg class="rb" style="left:25px;top:331px" width="12" height="12" shape-rendering="crispEdges"><rect x="4" y="0" width="1" height="1" fill="#808080"/><rect x="5" y="0" width="1" height="1" fill="#808080"/><rect x="6" y="0" width="1" height="1" fill="#808080"/><rect x="7" y="0" width="1" height="1" fill="#808080"/><rect x="2" y="1" width="1" height="1" fill="#808080"/><rect x="3" y="1" width="1" height="1" fill="#808080"/><rect x="4" y="1" width="1" height="1" fill="#404040"/><rect x="5" y="1" width="1" height="1" fill="#404040"/><rect x="6" y="1" width="1" height="1" fill="#404040"/><rect x="7" y="1" width="1" height="1" fill="#404040"/><rect x="8" y="1" width="1" height="1" fill="#808080"/><rect x="9" y="1" width="1" height="1" fill="#808080"/><rect x="4" y="2" width="1" height="1" fill="#f0f0f0"/><rect x="5" y="2" width="1" height="1" fill="#f0f0f0"/><rect x="6" y="2" width="1" height="1" fill="#f0f0f0"/><rect x="7" y="2" width="1" height="1" fill="#f0f0f0"/><rect x="1" y="2" width="1" height="1" fill="#808080"/><rect x="2" y="2" width="1" height="1" fill="#404040"/><rect x="3" y="2" width="1" height="1" fill="#404040"/><rect x="8" y="2" width="1" height="1" fill="#404040"/><rect x="9" y="2" width="1" height="1" fill="#404040"/><rect x="10" y="2" width="1" height="1" fill="#d4d0c8"/><rect x="3" y="3" width="1" height="1" fill="#f0f0f0"/><rect x="4" y="3" width="1" height="1" fill="#f0f0f0"/><rect x="5" y="3" width="1" height="1" fill="#f0f0f0"/><rect x="6" y="3" width="1" height="1" fill="#f0f0f0"/><rect x="7" y="3" width="1" height="1" fill="#f0f0f0"/><rect x="8" y="3" width="1" height="1" fill="#f0f0f0"/><rect x="1" y="3" width="1" height="1" fill="#808080"/><rect x="2" y="3" width="1" height="1" fill="#404040"/><rect x="9" y="3" width="1" height="1" fill="#d4d0c8"/><rect x="10" y="3" width="1" height="1" fill="#ffffff"/><rect x="2" y="4" width="1" height="1" fill="#f0f0f0"/><rect x="3" y="4" width="1" height="1" fill="#f0f0f0"/><rect x="4" y="4" width="1" height="1" fill="#f0f0f0"/><rect x="5" y="4" width="1" height="1" fill="#f0f0f0"/><rect x="6" y="4" width="1" height="1" fill="#f0f0f0"/><rect x="7" y="4" width="1" height="1" fill="#f0f0f0"/><rect x="8" y="4" width="1" height="1" fill="#f0f0f0"/><rect x="9" y="4" width="1" height="1" fill="#f0f0f0"/><rect x="0" y="4" width="1" height="1" fill="#808080"/><rect x="1" y="4" width="1" height="1" fill="#404040"/><rect x="10" y="4" width="1" height="1" fill="#d4d0c8"/><rect x="11" y="4" width="1" height="1" fill="#ffffff"/><rect x="2" y="5" width="1" height="1" fill="#f0f0f0"/><rect x="3" y="5" width="1" height="1" fill="#f0f0f0"/><rect x="4" y="5" width="1" height="1" fill="#f0f0f0"/><rect x="5" y="5" width="1" height="1" fill="#f0f0f0"/><rect x="6" y="5" width="1" height="1" fill="#f0f0f0"/><rect x="7" y="5" width="1" height="1" fill="#f0f0f0"/><rect x="8" y="5" width="1" height="1" fill="#f0f0f0"/><rect x="9" y="5" width="1" height="1" fill="#f0f0f0"/><rect x="0" y="5" width="1" height="1" fill="#808080"/><rect x="1" y="5" width="1" height="1" fill="#404040"/><rect x="10" y="5" width="1" height="1" fill="#d4d0c8"/><rect x="11" y="5" width="1" height="1" fill="#ffffff"/><rect x="2" y="6" width="1" height="1" fill="#f0f0f0"/><rect x="3" y="6" width="1" height="1" fill="#f0f0f0"/><rect x="4" y="6" width="1" height="1" fill="#f0f0f0"/><rect x="5" y="6" width="1" height="1" fill="#f0f0f0"/><rect x="6" y="6" width="1" height="1" fill="#f0f0f0"/><rect x="7" y="6" width="1" height="1" fill="#f0f0f0"/><rect x="8" y="6" width="1" height="1" fill="#f0f0f0"/><rect x="9" y="6" width="1" height="1" fill="#f0f0f0"/><rect x="0" y="6" width="1" height="1" fill="#808080"/><rect x="1" y="6" width="1" height="1" fill="#404040"/><rect x="10" y="6" width="1" height="1" fill="#d4d0c8"/><rect x="11" y="6" width="1" height="1" fill="#ffffff"/><rect x="2" y="7" width="1" height="1" fill="#f0f0f0"/><rect x="3" y="7" width="1" height="1" fill="#f0f0f0"/><rect x="4" y="7" width="1" height="1" fill="#f0f0f0"/><rect x="5" y="7" width="1" height="1" fill="#f0f0f0"/><rect x="6" y="7" width="1" height="1" fill="#f0f0f0"/><rect x="7" y="7" width="1" height="1" fill="#f0f0f0"/><rect x="8" y="7" width="1" height="1" fill="#f0f0f0"/><rect x="9" y="7" width="1" height="1" fill="#f0f0f0"/><rect x="0" y="7" width="1" height="1" fill="#808080"/><rect x="1" y="7" width="1" height="1" fill="#404040"/><rect x="10" y="7" width="1" height="1" fill="#d4d0c8"/><rect x="11" y="7" width="1" height="1" fill="#ffffff"/><rect x="3" y="8" width="1" height="1" fill="#f0f0f0"/><rect x="4" y="8" width="1" height="1" fill="#f0f0f0"/><rect x="5" y="8" width="1" height="1" fill="#f0f0f0"/><rect x="6" y="8" width="1" height="1" fill="#f0f0f0"/><rect x="7" y="8" width="1" height="1" fill="#f0f0f0"/><rect x="8" y="8" width="1" height="1" fill="#f0f0f0"/><rect x="1" y="8" width="1" height="1" fill="#808080"/><rect x="2" y="8" width="1" height="1" fill="#404040"/><rect x="9" y="8" width="1" height="1" fill="#d4d0c8"/><rect x="10" y="8" width="1" height="1" fill="#ffffff"/><rect x="4" y="9" width="1" height="1" fill="#f0f0f0"/><rect x="5" y="9" width="1" height="1" fill="#f0f0f0"/><rect x="6" y="9" width="1" height="1" fill="#f0f0f0"/><rect x="7" y="9" width="1" height="1" fill="#f0f0f0"/><rect x="1" y="9" width="1" height="1" fill="#808080"/><rect x="2" y="9" width="1" height="1" fill="#d4d0c8"/><rect x="3" y="9" width="1" height="1" fill="#d4d0c8"/><rect x="8" y="9" width="1" height="1" fill="#d4d0c8"/><rect x="9" y="9" width="1" height="1" fill="#d4d0c8"/><rect x="10" y="9" width="1" height="1" fill="#ffffff"/><rect x="2" y="10" width="1" height="1" fill="#ffffff"/><rect x="3" y="10" width="1" height="1" fill="#ffffff"/><rect x="4" y="10" width="1" height="1" fill="#d4d0c8"/><rect x="5" y="10" width="1" height="1" fill="#d4d0c8"/><rect x="6" y="10" width="1" height="1" fill="#d4d0c8"/><rect x="7" y="10" width="1" height="1" fill="#d4d0c8"/><rect x="8" y="10" width="1" height="1" fill="#ffffff"/><rect x="9" y="10" width="1" height="1" fill="#ffffff"/><rect x="4" y="11" width="1" height="1" fill="#ffffff"/><rect x="5" y="11" width="1" height="1" fill="#ffffff"/><rect x="6" y="11" width="1" height="1" fill="#ffffff"/><rect x="7" y="11" width="1" height="1" fill="#ffffff"/></svg>
<div class="t" style="left:44px;top:332px">Тета</div>
<svg class="rb" style="left:25px;top:354px" width="12" height="12" shape-rendering="crispEdges"><rect x="4" y="0" width="1" height="1" fill="#808080"/><rect x="5" y="0" width="1" height="1" fill="#808080"/><rect x="6" y="0" width="1" height="1" fill="#808080"/><rect x="7" y="0" width="1" height="1" fill="#808080"/><rect x="2" y="1" width="1" height="1" fill="#808080"/><rect x="3" y="1" width="1" height="1" fill="#808080"/><rect x="4" y="1" width="1" height="1" fill="#404040"/><rect x="5" y="1" width="1" height="1" fill="#404040"/><rect x="6" y="1" width="1" height="1" fill="#404040"/><rect x="7" y="1" width="1" height="1" fill="#404040"/><rect x="8" y="1" width="1" height="1" fill="#808080"/><rect x="9" y="1" width="1" height="1" fill="#808080"/><rect x="4" y="2" width="1" height="1" fill="#f0f0f0"/><rect x="5" y="2" width="1" height="1" fill="#f0f0f0"/><rect x="6" y="2" width="1" height="1" fill="#f0f0f0"/><rect x="7" y="2" width="1" height="1" fill="#f0f0f0"/><rect x="1" y="2" width="1" height="1" fill="#808080"/><rect x="2" y="2" width="1" height="1" fill="#404040"/><rect x="3" y="2" width="1" height="1" fill="#404040"/><rect x="8" y="2" width="1" height="1" fill="#404040"/><rect x="9" y="2" width="1" height="1" fill="#404040"/><rect x="10" y="2" width="1" height="1" fill="#d4d0c8"/><rect x="3" y="3" width="1" height="1" fill="#f0f0f0"/><rect x="4" y="3" width="1" height="1" fill="#f0f0f0"/><rect x="5" y="3" width="1" height="1" fill="#f0f0f0"/><rect x="6" y="3" width="1" height="1" fill="#f0f0f0"/><rect x="7" y="3" width="1" height="1" fill="#f0f0f0"/><rect x="8" y="3" width="1" height="1" fill="#f0f0f0"/><rect x="1" y="3" width="1" height="1" fill="#808080"/><rect x="2" y="3" width="1" height="1" fill="#404040"/><rect x="9" y="3" width="1" height="1" fill="#d4d0c8"/><rect x="10" y="3" width="1" height="1" fill="#ffffff"/><rect x="2" y="4" width="1" height="1" fill="#f0f0f0"/><rect x="3" y="4" width="1" height="1" fill="#f0f0f0"/><rect x="4" y="4" width="1" height="1" fill="#f0f0f0"/><rect x="5" y="4" width="1" height="1" fill="#f0f0f0"/><rect x="6" y="4" width="1" height="1" fill="#f0f0f0"/><rect x="7" y="4" width="1" height="1" fill="#f0f0f0"/><rect x="8" y="4" width="1" height="1" fill="#f0f0f0"/><rect x="9" y="4" width="1" height="1" fill="#f0f0f0"/><rect x="0" y="4" width="1" height="1" fill="#808080"/><rect x="1" y="4" width="1" height="1" fill="#404040"/><rect x="10" y="4" width="1" height="1" fill="#d4d0c8"/><rect x="11" y="4" width="1" height="1" fill="#ffffff"/><rect x="2" y="5" width="1" height="1" fill="#f0f0f0"/><rect x="3" y="5" width="1" height="1" fill="#f0f0f0"/><rect x="4" y="5" width="1" height="1" fill="#f0f0f0"/><rect x="5" y="5" width="1" height="1" fill="#f0f0f0"/><rect x="6" y="5" width="1" height="1" fill="#f0f0f0"/><rect x="7" y="5" width="1" height="1" fill="#f0f0f0"/><rect x="8" y="5" width="1" height="1" fill="#f0f0f0"/><rect x="9" y="5" width="1" height="1" fill="#f0f0f0"/><rect x="0" y="5" width="1" height="1" fill="#808080"/><rect x="1" y="5" width="1" height="1" fill="#404040"/><rect x="10" y="5" width="1" height="1" fill="#d4d0c8"/><rect x="11" y="5" width="1" height="1" fill="#ffffff"/><rect x="2" y="6" width="1" height="1" fill="#f0f0f0"/><rect x="3" y="6" width="1" height="1" fill="#f0f0f0"/><rect x="4" y="6" width="1" height="1" fill="#f0f0f0"/><rect x="5" y="6" width="1" height="1" fill="#f0f0f0"/><rect x="6" y="6" width="1" height="1" fill="#f0f0f0"/><rect x="7" y="6" width="1" height="1" fill="#f0f0f0"/><rect x="8" y="6" width="1" height="1" fill="#f0f0f0"/><rect x="9" y="6" width="1" height="1" fill="#f0f0f0"/><rect x="0" y="6" width="1" height="1" fill="#808080"/><rect x="1" y="6" width="1" height="1" fill="#404040"/><rect x="10" y="6" width="1" height="1" fill="#d4d0c8"/><rect x="11" y="6" width="1" height="1" fill="#ffffff"/><rect x="2" y="7" width="1" height="1" fill="#f0f0f0"/><rect x="3" y="7" width="1" height="1" fill="#f0f0f0"/><rect x="4" y="7" width="1" height="1" fill="#f0f0f0"/><rect x="5" y="7" width="1" height="1" fill="#f0f0f0"/><rect x="6" y="7" width="1" height="1" fill="#f0f0f0"/><rect x="7" y="7" width="1" height="1" fill="#f0f0f0"/><rect x="8" y="7" width="1" height="1" fill="#f0f0f0"/><rect x="9" y="7" width="1" height="1" fill="#f0f0f0"/><rect x="0" y="7" width="1" height="1" fill="#808080"/><rect x="1" y="7" width="1" height="1" fill="#404040"/><rect x="10" y="7" width="1" height="1" fill="#d4d0c8"/><rect x="11" y="7" width="1" height="1" fill="#ffffff"/><rect x="3" y="8" width="1" height="1" fill="#f0f0f0"/><rect x="4" y="8" width="1" height="1" fill="#f0f0f0"/><rect x="5" y="8" width="1" height="1" fill="#f0f0f0"/><rect x="6" y="8" width="1" height="1" fill="#f0f0f0"/><rect x="7" y="8" width="1" height="1" fill="#f0f0f0"/><rect x="8" y="8" width="1" height="1" fill="#f0f0f0"/><rect x="1" y="8" width="1" height="1" fill="#808080"/><rect x="2" y="8" width="1" height="1" fill="#404040"/><rect x="9" y="8" width="1" height="1" fill="#d4d0c8"/><rect x="10" y="8" width="1" height="1" fill="#ffffff"/><rect x="4" y="9" width="1" height="1" fill="#f0f0f0"/><rect x="5" y="9" width="1" height="1" fill="#f0f0f0"/><rect x="6" y="9" width="1" height="1" fill="#f0f0f0"/><rect x="7" y="9" width="1" height="1" fill="#f0f0f0"/><rect x="1" y="9" width="1" height="1" fill="#808080"/><rect x="2" y="9" width="1" height="1" fill="#d4d0c8"/><rect x="3" y="9" width="1" height="1" fill="#d4d0c8"/><rect x="8" y="9" width="1" height="1" fill="#d4d0c8"/><rect x="9" y="9" width="1" height="1" fill="#d4d0c8"/><rect x="10" y="9" width="1" height="1" fill="#ffffff"/><rect x="2" y="10" width="1" height="1" fill="#ffffff"/><rect x="3" y="10" width="1" height="1" fill="#ffffff"/><rect x="4" y="10" width="1" height="1" fill="#d4d0c8"/><rect x="5" y="10" width="1" height="1" fill="#d4d0c8"/><rect x="6" y="10" width="1" height="1" fill="#d4d0c8"/><rect x="7" y="10" width="1" height="1" fill="#d4d0c8"/><rect x="8" y="10" width="1" height="1" fill="#ffffff"/><rect x="9" y="10" width="1" height="1" fill="#ffffff"/><rect x="4" y="11" width="1" height="1" fill="#ffffff"/><rect x="5" y="11" width="1" height="1" fill="#ffffff"/><rect x="6" y="11" width="1" height="1" fill="#ffffff"/><rect x="7" y="11" width="1" height="1" fill="#ffffff"/></svg>
<div class="t" style="left:44px;top:355px">Вомма</div>
<!-- group otrisovka -->
<div class="grp" style="left:15px;top:388px;width:160px;height:69px"></div>
<div class="lbl" style="left:24px;top:384px;padding:0 4px 0 2px">Отрисовка графика %</div>
<div class="t" style="left:25px;top:405px">Выше</div>
<div class="btn raised" style="left:57px;top:400px;width:28px;height:23px;line-height:21px"><svg class="a" style="left:12px;top:8px" width="4" height="7" shape-rendering="crispEdges"><rect x="3" y="0" width="1" height="1" fill="#000"/><rect x="2" y="1" width="1" height="1" fill="#000"/><rect x="1" y="2" width="1" height="1" fill="#000"/><rect x="0" y="3" width="1" height="1" fill="#000"/><rect x="1" y="4" width="1" height="1" fill="#000"/><rect x="2" y="5" width="1" height="1" fill="#000"/><rect x="3" y="6" width="1" height="1" fill="#000"/></svg></div>
<div class="a sunken" style="left:91px;top:402px;width:44px;height:19px;background:#d4d0c8;text-align:center;line-height:19px">10</div>
<div class="btn raised" style="left:142px;top:400px;width:28px;height:23px;line-height:21px"><svg class="a" style="left:12px;top:8px" width="4" height="7" shape-rendering="crispEdges"><rect x="0" y="0" width="1" height="1" fill="#000"/><rect x="1" y="1" width="1" height="1" fill="#000"/><rect x="2" y="2" width="1" height="1" fill="#000"/><rect x="3" y="3" width="1" height="1" fill="#000"/><rect x="2" y="4" width="1" height="1" fill="#000"/><rect x="1" y="5" width="1" height="1" fill="#000"/><rect x="0" y="6" width="1" height="1" fill="#000"/></svg></div>
<div class="t" style="left:25px;top:431px">Ниже</div>
<div class="btn raised" style="left:57px;top:426px;width:28px;height:23px;line-height:21px"><svg class="a" style="left:12px;top:8px" width="4" height="7" shape-rendering="crispEdges"><rect x="3" y="0" width="1" height="1" fill="#000"/><rect x="2" y="1" width="1" height="1" fill="#000"/><rect x="1" y="2" width="1" height="1" fill="#000"/><rect x="0" y="3" width="1" height="1" fill="#000"/><rect x="1" y="4" width="1" height="1" fill="#000"/><rect x="2" y="5" width="1" height="1" fill="#000"/><rect x="3" y="6" width="1" height="1" fill="#000"/></svg></div>
<div class="a sunken" style="left:91px;top:428px;width:44px;height:19px;background:#d4d0c8;text-align:center;line-height:19px">15</div>
<div class="btn" style="left:142px;top:426px;width:28px;height:23px;line-height:21px;background:#d4d0c8;box-shadow:inset -1px -1px #000,inset 1px 1px #000,inset -2px -2px #404040,inset 2px 2px #fff,inset -3px -3px #808080"><svg class="a" style="left:12px;top:8px" width="4" height="7" shape-rendering="crispEdges"><rect x="0" y="0" width="1" height="1" fill="#000"/><rect x="1" y="1" width="1" height="1" fill="#000"/><rect x="2" y="2" width="1" height="1" fill="#000"/><rect x="3" y="3" width="1" height="1" fill="#000"/><rect x="2" y="4" width="1" height="1" fill="#000"/><rect x="1" y="5" width="1" height="1" fill="#000"/><rect x="0" y="6" width="1" height="1" fill="#000"/></svg></div>
<!-- grid steps -->
<div class="t" style="left:19px;top:490px">Шаг сетки Y</div>
<div class="a sunken" style="left:127px;top:487px;width:48px;height:19px;background:#d4d0c8"></div>
<div class="t" style="left:131px;top:490px;color:#a0a0a0">1000</div>
<div class="cb" style="left:19px;top:507px"><svg width="7" height="7" shape-rendering="crispEdges"><path d="M6 0h1v1h-1zM5 1h2v1h-2zM0 2h1v1h-1zM4 2h3v1h-3zM0 3h2v1h-2zM3 3h3v1h-3zM0 4h5v1h-5zM1 5h3v1h-3zM2 6h1v1h-1z" fill="#000"/></svg></div>
<div class="t" style="left:39px;top:508px">Авто</div>
<div class="t" style="left:97px;top:507px">5000</div>
<div class="t" style="left:19px;top:526px">Шаг сетки X</div>
<div class="a sunken" style="left:127px;top:524px;width:48px;height:19px;background:#d4d0c8"></div>
<div class="t" style="left:131px;top:526px">2500</div>
<!-- scrollbar -->
<div class="a" style="left:182px;top:69px;width:16px;height:479px;background:repeating-conic-gradient(#d4d0c8 0 25%,#fff 0 50%) 0 0/2px 2px"></div>
<div class="btn raised" style="left:182px;top:69px;width:16px;height:16px"><svg class="a" style="left:4px;top:6px" width="7" height="4" shape-rendering="crispEdges"><path d="M3 0h1v1h-1zM2 1h3v1h-3zM1 2h5v1h-5zM0 3h7v1h-7z" fill="#000"/></svg></div>
<div class="a raised" style="left:182px;top:85px;width:16px;height:407px"></div>
<div class="btn raised" style="left:182px;top:532px;width:16px;height:16px"><svg class="a" style="left:4px;top:6px" width="7" height="4" shape-rendering="crispEdges"><path d="M0 0h7v1h-7zM1 1h5v1h-5zM2 2h3v1h-3zM3 3h1v1h-1z" fill="#000"/></svg></div>


<svg width="960" height="780" style="position:absolute;left:0;top:0">
<g stroke="#d2d2d2" stroke-width="1" stroke-dasharray="3,1" shape-rendering="crispEdges"><line x1="296.5" y1="124" x2="296.5" y2="523" /><line x1="334.5" y1="124" x2="334.5" y2="523" /><line x1="372.5" y1="124" x2="372.5" y2="523" /><line x1="410.5" y1="124" x2="410.5" y2="523" /><line x1="448.5" y1="124" x2="448.5" y2="523" /><line x1="486.5" y1="124" x2="486.5" y2="523" /><line x1="524.5" y1="124" x2="524.5" y2="523" /><line x1="562.5" y1="124" x2="562.5" y2="523" /><line x1="600.5" y1="124" x2="600.5" y2="523" /><line x1="638.5" y1="124" x2="638.5" y2="523" /><line x1="676.5" y1="124" x2="676.5" y2="523" /><line x1="714.5" y1="124" x2="714.5" y2="523" /><line x1="753.5" y1="124" x2="753.5" y2="523" /><line x1="791.5" y1="124" x2="791.5" y2="523" /><line x1="829.5" y1="124" x2="829.5" y2="523" /><line x1="867.5" y1="124" x2="867.5" y2="523" /><line x1="905.5" y1="124" x2="905.5" y2="523" /><line x1="296" y1="124.5" x2="905" y2="124.5" /><line x1="296" y1="155.5" x2="905" y2="155.5" /><line x1="296" y1="186.5" x2="905" y2="186.5" /><line x1="296" y1="216.5" x2="905" y2="216.5" /><line x1="296" y1="247.5" x2="905" y2="247.5" /><line x1="296" y1="278.5" x2="905" y2="278.5" /><line x1="296" y1="308.5" x2="905" y2="308.5" /><line x1="296" y1="339.5" x2="905" y2="339.5" /><line x1="296" y1="370.5" x2="905" y2="370.5" /><line x1="296" y1="400.5" x2="905" y2="400.5" /><line x1="296" y1="431.5" x2="905" y2="431.5" /><line x1="296" y1="462.5" x2="905" y2="462.5" /><line x1="296" y1="492.5" x2="905" y2="492.5" /><line x1="296" y1="523.5" x2="905" y2="523.5" /></g>
<line x1="296.5" y1="124" x2="296.5" y2="523" stroke="#c8c8c8" stroke-width="2"/>
<line x1="296" y1="247.4" x2="905" y2="247.4" stroke="#c8c8c8" stroke-width="1.8"/>
<g stroke="#000" stroke-width="1.1"><line x1="288" y1="124.5" x2="296" y2="124.5"/><line x1="288" y1="155.5" x2="296" y2="155.5"/><line x1="288" y1="186.5" x2="296" y2="186.5"/><line x1="288" y1="216.5" x2="296" y2="216.5"/><line x1="288" y1="247.5" x2="296" y2="247.5"/><line x1="288" y1="278.5" x2="296" y2="278.5"/><line x1="288" y1="308.5" x2="296" y2="308.5"/><line x1="288" y1="339.5" x2="296" y2="339.5"/><line x1="288" y1="370.5" x2="296" y2="370.5"/><line x1="288" y1="400.5" x2="296" y2="400.5"/><line x1="288" y1="431.5" x2="296" y2="431.5"/><line x1="288" y1="462.5" x2="296" y2="462.5"/><line x1="288" y1="492.5" x2="296" y2="492.5"/><line x1="288" y1="523.5" x2="296" y2="523.5"/><line x1="296.5" y1="247" x2="296.5" y2="252"/><line x1="334.5" y1="247" x2="334.5" y2="252"/><line x1="372.5" y1="247" x2="372.5" y2="252"/><line x1="410.5" y1="247" x2="410.5" y2="252"/><line x1="448.5" y1="247" x2="448.5" y2="252"/><line x1="486.5" y1="247" x2="486.5" y2="252"/><line x1="524.5" y1="247" x2="524.5" y2="252"/><line x1="562.5" y1="247" x2="562.5" y2="252"/><line x1="600.5" y1="247" x2="600.5" y2="252"/><line x1="638.5" y1="247" x2="638.5" y2="252"/><line x1="676.5" y1="247" x2="676.5" y2="252"/><line x1="714.5" y1="247" x2="714.5" y2="252"/><line x1="753.5" y1="247" x2="753.5" y2="252"/><line x1="791.5" y1="247" x2="791.5" y2="252"/><line x1="829.5" y1="247" x2="829.5" y2="252"/><line x1="867.5" y1="247" x2="867.5" y2="252"/><line x1="905.5" y1="247" x2="905.5" y2="252"/></g>
<line x1="578.5" y1="124" x2="578.5" y2="523" stroke="#ffb4c0" stroke-width="1"/>
<line x1="731.5" y1="124" x2="731.5" y2="523" stroke="#ffb4c0" stroke-width="1"/>
<line x1="655.1" y1="124" x2="655.1" y2="523" stroke="#96a2b2" stroke-width="1.6"/>
<g font-family="Liberation Sans, sans-serif" font-size="12px" fill="#000"><text transform="translate(285,128.0) scale(1,1.1)" text-anchor="end" font-size="12.6px">20000</text><text transform="translate(285,159.0) scale(1,1.1)" text-anchor="end" font-size="12.6px">15000</text><text transform="translate(285,190.0) scale(1,1.1)" text-anchor="end" font-size="12.6px">10000</text><text transform="translate(285,220.0) scale(1,1.1)" text-anchor="end" font-size="12.6px">5000</text><text transform="translate(285,251.0) scale(1,1.1)" text-anchor="end" font-size="12.6px">0</text><text transform="translate(285,282.0) scale(1,1.1)" text-anchor="end" font-size="12.6px">-5000</text><text transform="translate(285,312.0) scale(1,1.1)" text-anchor="end" font-size="12.6px">-10000</text><text transform="translate(285,343.0) scale(1,1.1)" text-anchor="end" font-size="12.6px">-15000</text><text transform="translate(285,374.0) scale(1,1.1)" text-anchor="end" font-size="12.6px">-20000</text><text transform="translate(285,404.0) scale(1,1.1)" text-anchor="end" font-size="12.6px">-25000</text><text transform="translate(285,435.0) scale(1,1.1)" text-anchor="end" font-size="12.6px">-30000</text><text transform="translate(285,466.0) scale(1,1.1)" text-anchor="end" font-size="12.6px">-35000</text><text transform="translate(285,496.0) scale(1,1.1)" text-anchor="end" font-size="12.6px">-40000</text><text transform="translate(285,527.0) scale(1,1.1)" text-anchor="end" font-size="12.6px">-45000</text><text x="296.6" y="263.9" text-anchor="middle" font-size="10.5px">122500</text><text x="334.7" y="278.9" text-anchor="middle" font-size="10.5px">125000</text><text x="372.7" y="263.9" text-anchor="middle" font-size="10.5px">127500</text><text x="410.8" y="278.9" text-anchor="middle" font-size="10.5px">130000</text><text x="448.9" y="263.9" text-anchor="middle" font-size="10.5px">132500</text><text x="486.9" y="278.9" text-anchor="middle" font-size="10.5px">135000</text><text x="525.0" y="263.9" text-anchor="middle" font-size="10.5px">137500</text><text x="563.0" y="278.9" text-anchor="middle" font-size="10.5px">140000</text><text x="601.1" y="263.9" text-anchor="middle" font-size="10.5px">142500</text><text x="639.2" y="278.9" text-anchor="middle" font-size="10.5px">145000</text><text x="677.2" y="263.9" text-anchor="middle" font-size="10.5px">147500</text><text x="715.3" y="278.9" text-anchor="middle" font-size="10.5px">150000</text><text x="753.4" y="263.9" text-anchor="middle" font-size="10.5px">152500</text><text x="791.4" y="278.9" text-anchor="middle" font-size="10.5px">155000</text><text x="829.5" y="263.9" text-anchor="middle" font-size="10.5px">157500</text><text x="867.5" y="278.9" text-anchor="middle" font-size="10.5px">160000</text><text x="905.6" y="263.9" text-anchor="middle" font-size="10.5px">162500</text></g>
<polyline points="320.2,488.3 323.0,484.9 325.7,481.6 328.5,478.2 331.3,474.9 334.1,471.5 336.8,468.2 339.6,464.8 342.4,461.5 345.2,458.1 347.9,454.8 350.7,451.4 353.5,448.1 356.3,444.8 359.0,441.4 361.8,438.1 364.6,434.7 367.4,431.4 370.1,428.1 372.9,424.8 375.7,421.4 378.5,418.1 381.2,414.8 384.0,411.5 386.8,408.2 389.6,404.8 392.3,401.5 395.1,398.2 397.9,394.9 400.7,391.6 403.4,388.4 406.2,385.1 409.0,381.8 411.8,378.5 414.5,375.3 417.3,372.0 420.1,368.8 422.9,365.5 425.6,362.3 428.4,359.1 431.2,355.9 434.0,352.7 436.7,349.5 439.5,346.3 442.3,343.2 445.1,340.0 447.8,336.9 450.6,333.8 453.4,330.7 456.2,327.6 458.9,324.5 461.7,321.5 464.5,318.5 467.3,315.5 470.0,312.5 472.8,309.5 475.6,306.6 478.4,303.6 481.1,300.8 483.9,297.9 486.7,295.0 489.5,292.2 492.2,289.4 495.0,286.7 497.8,284.0 500.6,281.3 503.3,278.6 506.1,276.0 508.9,273.4 511.7,270.8 514.4,268.3 517.2,265.9 520.0,263.4 522.8,261.0 525.5,258.7 528.3,256.3 531.1,254.1 533.9,251.8 536.6,249.7 539.4,247.5 542.2,245.4 545.0,243.4 547.7,241.4 550.5,239.5 553.3,237.6 556.1,235.7 558.8,233.9 561.6,232.2 564.4,230.5 567.2,228.9 569.9,227.3 572.7,225.8 575.5,224.3 578.3,222.9 581.0,221.5 583.8,220.2 586.6,219.0 589.4,217.8 592.1,216.6 594.9,215.6 597.7,214.5 600.4,213.6 603.2,212.6 606.0,211.8 608.8,211.0 611.5,210.2 614.3,209.5 617.1,208.9 619.9,208.3 622.6,207.8 625.4,207.3 628.2,206.8 631.0,206.5 633.7,206.1 636.5,205.8 639.3,205.6 642.1,205.4 644.8,205.3 647.6,205.2 650.4,205.2 653.2,205.2 655.9,205.2 658.7,205.3 661.5,205.4 664.3,205.6 667.0,205.8 669.8,206.0 672.6,206.3 675.4,206.7 678.1,207.0 680.9,207.4 683.7,207.8 686.5,208.3 689.2,208.8 692.0,209.3 694.8,209.9 697.6,210.5 700.3,211.1 703.1,211.7 705.9,212.4 708.7,213.1 711.4,213.8 714.2,214.5 717.0,215.3 719.8,216.1 722.5,216.9 725.3,217.7 728.1,218.5 730.9,219.4 733.6,220.2 736.4,221.1 739.2,222.0 742.0,222.9 744.7,223.9 747.5,224.8 750.3,225.8 753.1,226.7 755.8,227.7 758.6,228.7 761.4,229.7 764.2,230.7 766.9,231.7 769.7,232.7 772.5,233.8 775.3,234.8 778.0,235.8 780.8,236.9 783.6,237.9 786.4,239.0 789.1,240.1 791.9,241.1 794.7,242.2 797.5,243.3 800.2,244.4 803.0,245.4 805.8,246.5 808.6,247.6 811.3,248.7 814.1,249.8 816.9,250.9 819.7,252.0 822.4,253.1 825.2,254.2 828.0,255.3 830.8,256.4 833.5,257.6 836.3,258.7 839.1,259.8 841.9,260.9 844.6,262.0 847.4,263.1 850.2,264.2 853.0,265.3 855.7,266.5 858.5,267.6 861.3,268.7 864.1,269.8 866.8,270.9 869.6,272.0 872.4,273.2 875.1,274.3" fill="none" stroke="#9a9a9a" stroke-width="1.2"/>
<polyline points="320.2,488.3 323.0,485.0 325.7,481.6 328.5,478.3 331.3,474.9 334.1,471.6 336.8,468.2 339.6,464.9 342.4,461.5 345.2,458.2 347.9,454.9 350.7,451.5 353.5,448.2 356.3,444.9 359.0,441.5 361.8,438.2 364.6,434.9 367.4,431.6 370.1,428.2 372.9,424.9 375.7,421.6 378.5,418.3 381.2,415.0 384.0,411.7 386.8,408.4 389.6,405.1 392.3,401.8 395.1,398.5 397.9,395.3 400.7,392.0 403.4,388.7 406.2,385.5 409.0,382.2 411.8,379.0 414.5,375.8 417.3,372.5 420.1,369.3 422.9,366.1 425.6,362.9 428.4,359.7 431.2,356.6 434.0,353.4 436.7,350.3 439.5,347.2 442.3,344.0 445.1,340.9 447.8,337.9 450.6,334.8 453.4,331.7 456.2,328.7 458.9,325.7 461.7,322.7 464.5,319.7 467.3,316.8 470.0,313.8 472.8,310.9 475.6,308.1 478.4,305.2 481.1,302.4 483.9,299.6 486.7,296.8 489.5,294.0 492.2,291.3 495.0,288.6 497.8,286.0 500.6,283.4 503.3,280.8 506.1,278.2 508.9,275.7 511.7,273.2 514.4,270.8 517.2,268.3 520.0,266.0 522.8,263.6 525.5,261.3 528.3,259.1 531.1,256.9 533.9,254.7 536.6,252.6 539.4,250.5 542.2,248.5 545.0,246.5 547.7,244.6 550.5,242.7 553.3,240.9 556.1,239.1 558.8,237.3 561.6,235.6 564.4,234.0 567.2,232.4 569.9,230.8 572.7,229.4 575.5,227.9 578.3,226.5 581.0,225.2 583.8,223.9 586.6,222.7 589.4,221.5 592.1,220.4 594.9,219.3 597.7,218.3 600.4,217.3 603.2,216.4 606.0,215.5 608.8,214.7 611.5,214.0 614.3,213.2 617.1,212.6 619.9,212.0 622.6,211.4 625.4,210.9 628.2,210.4 631.0,210.0 633.7,209.7 636.5,209.3 639.3,209.1 642.1,208.8 644.8,208.7 647.6,208.5 650.4,208.4 653.2,208.4 655.9,208.4 658.7,208.4 661.5,208.5 664.3,208.6 667.0,208.7 669.8,208.9 672.6,209.2 675.4,209.4 678.1,209.7 680.9,210.1 683.7,210.4 686.5,210.8 689.2,211.2 692.0,211.7 694.8,212.2 697.6,212.7 700.3,213.3 703.1,213.8 705.9,214.4 708.7,215.1 711.4,215.7 714.2,216.4 717.0,217.1 719.8,217.8 722.5,218.5 725.3,219.3 728.1,220.0 730.9,220.8 733.6,221.7 736.4,222.5 739.2,223.3 742.0,224.2 744.7,225.1 747.5,226.0 750.3,226.9 753.1,227.8 755.8,228.7 758.6,229.6 761.4,230.6 764.2,231.6 766.9,232.5 769.7,233.5 772.5,234.5 775.3,235.5 778.0,236.5 780.8,237.5 783.6,238.5 786.4,239.6 789.1,240.6 791.9,241.6 794.7,242.7 797.5,243.7 800.2,244.8 803.0,245.8 805.8,246.9 808.6,248.0 811.3,249.1 814.1,250.1 816.9,251.2 819.7,252.3 822.4,253.4 825.2,254.5 828.0,255.6 830.8,256.7 833.5,257.7 836.3,258.8 839.1,259.9 841.9,261.0 844.6,262.1 847.4,263.2 850.2,264.4 853.0,265.5 855.7,266.6 858.5,267.7 861.3,268.8 864.1,269.9 866.8,271.0 869.6,272.1 872.4,273.2 875.1,274.3" fill="none" stroke="#3c3c3c" stroke-width="1.4"/>
<polyline points="320.2,488.2 601.1,148.5 639.2,148.5 677.2,194.5 875.1,274.3" fill="none" stroke="#1c1c1c" stroke-width="2.1" stroke-linejoin="round"/>
<circle cx="622.7" cy="148.5" r="3.2" fill="#1c1c1c"/>
<circle cx="622.7" cy="208.4" r="2.6" fill="#a8a8a8"/>
<circle cx="623.0" cy="212.0" r="2.9" fill="#555"/>
<polyline points="609.6,202.4 611,205 612.5,208.5 614.5,213 616,217 616.5,219 618,221 618.5,223.5" fill="none" stroke="#ff1010" stroke-width="2" stroke-linecap="round"/>
<polyline points="711.2,219.6 715,214 717,210.5 720.9,207.3" fill="none" stroke="#ff1010" stroke-width="2"/>
<text x="282.9" y="96.3" textLength="67.7" lengthAdjust="spacingAndGlyphs" font-family="Liberation Sans, sans-serif" font-size="13.2px" fill="#000">Портфель:</text>
<text x="355.2" y="96.3" textLength="24.4" lengthAdjust="spacingAndGlyphs" font-family="Liberation Sans, sans-serif" font-size="13.2px" fill="#000">Ось</text>
<text x="384.1" y="96.3" textLength="13.8" lengthAdjust="spacingAndGlyphs" font-family="Liberation Sans, sans-serif" font-size="13.2px" fill="#000">X:</text>
<text x="403.2" y="96.3" textLength="41.4" lengthAdjust="spacingAndGlyphs" font-family="Liberation Sans, sans-serif" font-size="13.2px" fill="#000">143950</text>
<text x="449.4" y="96.3" textLength="24.3" lengthAdjust="spacingAndGlyphs" font-family="Liberation Sans, sans-serif" font-size="13.2px" fill="#000">Ось</text>
<text x="478.1" y="96.3" textLength="12.3" lengthAdjust="spacingAndGlyphs" font-family="Liberation Sans, sans-serif" font-size="13.2px" fill="#000">Y:</text>
<text x="501.1" y="96.3" textLength="56.0" lengthAdjust="spacingAndGlyphs" font-family="Liberation Sans, sans-serif" font-size="13.2px" fill="#000">(Текущий</text>
<text x="561.9" y="96.3" textLength="50.2" lengthAdjust="spacingAndGlyphs" font-family="Liberation Sans, sans-serif" font-size="13.2px" fill="#000">5921,18)</text>
<text x="621.9" y="96.3" textLength="19.3" lengthAdjust="spacingAndGlyphs" font-family="Liberation Sans, sans-serif" font-size="13.2px" fill="#000">(+1</text>
<text x="644.4" y="96.3" textLength="19.3" lengthAdjust="spacingAndGlyphs" font-family="Liberation Sans, sans-serif" font-size="13.2px" fill="#000">дн.</text>
<text x="669.4" y="96.3" textLength="51.0" lengthAdjust="spacingAndGlyphs" font-family="Liberation Sans, sans-serif" font-size="13.2px" fill="#000">6515,92)</text>
<text x="728.6" y="96.3" textLength="21.0" lengthAdjust="spacingAndGlyphs" font-family="Liberation Sans, sans-serif" font-size="13.2px" fill="#000">(На</text>
<text x="754.1" y="96.3" textLength="73.0" lengthAdjust="spacingAndGlyphs" font-family="Liberation Sans, sans-serif" font-size="13.2px" fill="#000">экспирацию</text>
<text x="831.9" y="96.3" textLength="38.5" lengthAdjust="spacingAndGlyphs" font-family="Liberation Sans, sans-serif" font-size="13.2px" fill="#000">16160)</text>
</svg>

<!-- splitter -->
<div class="a" style="left:4px;top:552px;width:952px;height:3px;background:#f4f4f4"></div><div class="a" style="left:4px;top:553px;width:952px;height:2px;background:repeating-conic-gradient(#000 0 25%,#f4f4f4 0 50%) 1px 0/2px 2px"></div>

<!-- portfolio -->
<div class="a" style="left:4px;top:555px;width:952px;height:199px;background:#f4f4f4"></div>
<div class="grp" style="left:4px;top:561px;width:951px;height:194px;border-bottom:0"></div>
<div class="lbl" style="left:13px;top:557px">Портфель</div>
<!-- combo -->
<div class="a sunken" style="left:10px;top:578px;width:91px;height:20px;background:#f0f0f0;width:92px"></div>
<div class="t" style="left:13px;top:582px">1-пр.стренгл</div>
<div class="a raised" style="left:85px;top:580px;width:15px;height:16px"><svg class="a" style="left:3px;top:6px" width="7" height="4" shape-rendering="crispEdges"><path d="M0 0h7v1h-7zM1 1h5v1h-5zM2 2h3v1h-3zM3 3h1v1h-1z" fill="#000"/></svg></div>
<div class="btn raised" style="left:108px;top:576px;width:55px;height:23px;line-height:21px">Импорт</div>
<div class="btn raised" style="left:169px;top:576px;width:57px;height:23px;line-height:21px">Удалить</div>
<div class="btn raised" style="left:232px;top:576px;width:71px;height:23px;line-height:21px">Сохранить</div>
<div class="cb" style="left:318px;top:582px;background:#d4d0c8"></div>
<div class="t" style="left:338px;top:583px;color:#505050">DH</div>
<!-- spinners -->
<div class="a sunken" style="left:366px;top:579px;width:32px;height:19px;background:#d4d0c8"></div>
<div class="t" style="left:370px;top:582px">0</div>
<div class="a raised" style="left:381px;top:581px;width:16px;height:8px"></div>
<div class="a raised" style="left:381px;top:589px;width:16px;height:8px"></div>
<div class="a sunken" style="left:405px;top:579px;width:32px;height:19px;background:#d4d0c8"></div>
<div class="t" style="left:409px;top:582px">1</div>
<div class="a raised" style="left:420px;top:581px;width:16px;height:8px"></div>
<div class="a raised" style="left:420px;top:589px;width:16px;height:8px"></div>
<svg class="a" style="left:0;top:0" width="960" height="780" shape-rendering="crispEdges" fill="#000"><rect x="389" y="584" width="1" height="1"/><rect x="388" y="585" width="3" height="1"/><rect x="388" y="592" width="3" height="1"/><rect x="389" y="593" width="1" height="1"/><rect x="428" y="584" width="1" height="1"/><rect x="427" y="585" width="3" height="1"/><rect x="427" y="592" width="3" height="1"/><rect x="428" y="593" width="1" height="1"/></svg>
<div class="cb" style="left:472px;top:581px"></div>
<div class="t" style="left:492px;top:583px">M</div>
<div class="t" style="left:568px;top:582px">D</div>
<div class="a sunken" style="left:585px;top:578px;width:31px;height:19px;background:#f4f4f4;text-align:center;line-height:21px">0</div>
<div class="t" style="left:625px;top:582px">V1</div>
<div class="a sunken" style="left:648px;top:578px;width:30px;height:19px;background:#f4f4f4;text-align:center;line-height:21px">0</div>
<div class="t" style="left:688px;top:582px">V2</div>
<div class="a sunken" style="left:711px;top:578px;width:31px;height:19px;background:#f4f4f4;text-align:center;line-height:21px;color:#a0a0a0">0</div>
<div class="t" style="left:777px;top:582px">P1</div>
<div class="a sunken" style="left:794px;top:578px;width:54px;height:19px;background:#f4f4f4;text-align:center;line-height:21px">0</div>
<div class="t" style="left:858px;top:582px">RIH1 146050</div>
<div class="btn" style="left:926px;top:575px;width:24px;height:23px;background:#f4f4f4;box-shadow:inset -1px -1px #000,inset -2px -2px #808080"><div class="a" style="left:8px;top:17px;width:6px;height:1px;background:#000"></div></div>
<!-- table -->
<div class="a" style="left:10px;top:605px;width:940px;height:149px;background:#f4f4f4;border-top:2px solid #000;border-left:2px solid #000"></div>
<div class="a" style="left:12px;top:607px;width:935px;height:29px;background:#d4d4d4;border-top:1px solid #fff;border-left:1px solid #fff"></div>
<div class="t" style="left:11px;top:617px;width:51px;text-align:center;line-height:13px">Расчет</div>
<div class="t" style="left:63px;top:617px;width:98px;text-align:center;line-height:13px">Код бумаги</div>
<div class="a" style="left:61px;top:608px;width:1px;height:27px;background:#a0a0a0;box-shadow:1px 0 #fff"></div>
<div class="t" style="left:162px;top:610px;width:68px;text-align:center;line-height:13px">Тип<br>опциона</div>
<div class="a" style="left:161px;top:608px;width:1px;height:27px;background:#a0a0a0;box-shadow:1px 0 #fff"></div>
<div class="t" style="left:231px;top:610px;width:87px;text-align:center;line-height:13px">Дата<br>погашения</div>
<div class="a" style="left:230px;top:608px;width:1px;height:27px;background:#a0a0a0;box-shadow:1px 0 #fff"></div>
<div class="t" style="left:319px;top:610px;width:101px;text-align:center;line-height:13px">Дней до<br>погашения</div>
<div class="a" style="left:317px;top:608px;width:1px;height:27px;background:#a0a0a0;box-shadow:1px 0 #fff"></div>
<div class="t" style="left:421px;top:617px;width:71px;text-align:center;line-height:13px">Количество</div>
<div class="a" style="left:419px;top:608px;width:1px;height:27px;background:#a0a0a0;box-shadow:1px 0 #fff"></div>
<div class="t" style="left:493px;top:610px;width:80px;text-align:center;line-height:13px">Цена<br>открытия</div>
<div class="a" style="left:491px;top:608px;width:1px;height:27px;background:#a0a0a0;box-shadow:1px 0 #fff"></div>
<div class="t" style="left:574px;top:610px;width:125px;text-align:center;line-height:13px">Волатильность<br>открытия</div>
<div class="a" style="left:572px;top:608px;width:1px;height:27px;background:#a0a0a0;box-shadow:1px 0 #fff"></div>
<div class="t" style="left:700px;top:610px;width:105px;text-align:center;line-height:13px">Теоретическая<br>цена</div>
<div class="a" style="left:699px;top:608px;width:1px;height:27px;background:#a0a0a0;box-shadow:1px 0 #fff"></div>
<div class="t" style="left:805px;top:617px;width:51px;text-align:center;line-height:13px">Профит</div>
<div class="a" style="left:804px;top:608px;width:1px;height:27px;background:#a0a0a0;box-shadow:1px 0 #fff"></div>
<div class="t" style="left:857px;top:617px;width:90px;text-align:center;line-height:13px">Волатильность</div>
<div class="a" style="left:856px;top:608px;width:1px;height:27px;background:#a0a0a0;box-shadow:1px 0 #fff"></div>
<div class="a" style="left:11px;top:637px;width:50px;height:21px;background:#0a246a"></div>
<div class="cb" style="left:30px;top:641px;background:#f0f0f0"><svg width="7" height="7" shape-rendering="crispEdges"><path d="M6 0h1v1h-1zM5 1h2v1h-2zM0 2h1v1h-1zM4 2h3v1h-3zM0 3h2v1h-2zM3 3h3v1h-3zM0 4h5v1h-5zM1 5h3v1h-3zM2 6h1v1h-1z" fill="#000"/></svg></div>
<div class="t" style="left:63px;top:642px;width:98px;text-align:center">RI145000BB1</div>
<div class="t" style="left:162px;top:642px;width:68px;text-align:center">Call</div>
<div class="t" style="left:231px;top:642px;width:87px;text-align:center">18.02.2021</div>
<div class="t" style="left:319px;top:642px;width:101px;text-align:center">10</div>
<div class="t" style="left:421px;top:642px;width:71px;text-align:center">-3</div>
<div class="t" style="left:493px;top:642px;width:80px;text-align:center">3530</div>
<div class="t" style="left:574px;top:642px;width:125px;text-align:center">31,2</div>
<div class="t" style="left:700px;top:642px;width:105px;text-align:center">3166,36</div>
<div class="a" style="left:805px;top:637px;width:51px;height:21px;background:#90ee90"></div>
<div class="t" style="left:805px;top:642px;width:51px;text-align:center">1090,92</div>
<div class="t" style="left:857px;top:642px;width:90px;text-align:center">27,34</div>
<div class="cb" style="left:30px;top:663px;background:#f0f0f0"><svg width="7" height="7" shape-rendering="crispEdges"><path d="M6 0h1v1h-1zM5 1h2v1h-2zM0 2h1v1h-1zM4 2h3v1h-3zM0 3h2v1h-2zM3 3h3v1h-3zM0 4h5v1h-5zM1 5h3v1h-3zM2 6h1v1h-1z" fill="#000"/></svg></div>
<div class="t" style="left:63px;top:664px;width:98px;text-align:center">RI142500BN1</div>
<div class="t" style="left:162px;top:664px;width:68px;text-align:center">Put</div>
<div class="t" style="left:231px;top:664px;width:87px;text-align:center">18.02.2021</div>
<div class="t" style="left:319px;top:664px;width:101px;text-align:center">10</div>
<div class="t" style="left:421px;top:664px;width:71px;text-align:center">-3</div>
<div class="t" style="left:493px;top:664px;width:80px;text-align:center">3880</div>
<div class="t" style="left:574px;top:664px;width:125px;text-align:center">57,89</div>
<div class="t" style="left:700px;top:664px;width:105px;text-align:center">1321,71</div>
<div class="a" style="left:805px;top:659px;width:51px;height:21px;background:#90ee90"></div>
<div class="t" style="left:805px;top:664px;width:51px;text-align:center">7674,87</div>
<div class="t" style="left:857px;top:664px;width:90px;text-align:center">28,96</div>
<div class="cb" style="left:30px;top:685px;background:#f0f0f0"><svg width="7" height="7" shape-rendering="crispEdges"><path d="M6 0h1v1h-1zM5 1h2v1h-2zM0 2h1v1h-1zM4 2h3v1h-3zM0 3h2v1h-2zM3 3h3v1h-3zM0 4h5v1h-5zM1 5h3v1h-3zM2 6h1v1h-1z" fill="#000"/></svg></div>
<div class="t" style="left:63px;top:686px;width:98px;text-align:center">RI147500BB1</div>
<div class="t" style="left:162px;top:686px;width:68px;text-align:center">Call</div>
<div class="t" style="left:231px;top:686px;width:87px;text-align:center">18.02.2021</div>
<div class="t" style="left:319px;top:686px;width:101px;text-align:center">10</div>
<div class="t" style="left:421px;top:686px;width:71px;text-align:center">2</div>
<div class="t" style="left:493px;top:686px;width:80px;text-align:center">1860</div>
<div class="t" style="left:574px;top:686px;width:125px;text-align:center">26,18</div>
<div class="t" style="left:700px;top:686px;width:105px;text-align:center">1852,25</div>
<div class="a" style="left:805px;top:681px;width:51px;height:21px;background:#ffb6c1"></div>
<div class="t" style="left:805px;top:686px;width:51px;text-align:center">-15,5</div>
<div class="t" style="left:857px;top:686px;width:90px;text-align:center">26,1</div>
<div class="cb" style="left:30px;top:707px;background:#f0f0f0"><svg width="7" height="7" shape-rendering="crispEdges"><path d="M6 0h1v1h-1zM5 1h2v1h-2zM0 2h1v1h-1zM4 2h3v1h-3zM0 3h2v1h-2zM3 3h3v1h-3zM0 4h5v1h-5zM1 5h3v1h-3zM2 6h1v1h-1z" fill="#000"/></svg></div>
<div class="t" style="left:63px;top:708px;width:98px;text-align:center">FixedProfit</div>
<div class="a" style="left:805px;top:703px;width:51px;height:21px;background:#ffb6c1"></div>
<div class="t" style="left:805px;top:708px;width:51px;text-align:center">-2350</div>
<div class="cb" style="left:30px;top:729px;background:#f0f0f0"><svg width="7" height="7" shape-rendering="crispEdges"><path d="M6 0h1v1h-1zM5 1h2v1h-2zM0 2h1v1h-1zM4 2h3v1h-3zM0 3h2v1h-2zM3 3h3v1h-3zM0 4h5v1h-5zM1 5h3v1h-3zM2 6h1v1h-1z" fill="#000"/></svg></div>
<div class="t" style="left:63px;top:730px;width:98px;text-align:center">Итого:</div>
<div class="a" style="left:805px;top:725px;width:51px;height:21px;background:#90ee90"></div>
<div class="t" style="left:805px;top:730px;width:51px;text-align:center">6400,29</div>
<div class="a" style="left:12px;top:636px;width:935px;height:1px;background:#707070"></div>
<div class="a" style="left:10px;top:658px;width:940px;height:1px;background:#000"></div>
<div class="a" style="left:10px;top:680px;width:940px;height:1px;background:#000"></div>
<div class="a" style="left:10px;top:702px;width:940px;height:1px;background:#000"></div>
<div class="a" style="left:10px;top:724px;width:940px;height:1px;background:#000"></div>
<div class="a" style="left:10px;top:746px;width:940px;height:1px;background:#000"></div>
<div class="a" style="left:10px;top:636px;width:1px;height:111px;background:#000"></div>
<div class="a" style="left:61px;top:636px;width:1px;height:111px;background:#000"></div>
<div class="a" style="left:161px;top:636px;width:1px;height:111px;background:#000"></div>
<div class="a" style="left:230px;top:636px;width:1px;height:111px;background:#000"></div>
<div class="a" style="left:317px;top:636px;width:1px;height:111px;background:#000"></div>
<div class="a" style="left:419px;top:636px;width:1px;height:111px;background:#000"></div>
<div class="a" style="left:491px;top:636px;width:1px;height:111px;background:#000"></div>
<div class="a" style="left:572px;top:636px;width:1px;height:111px;background:#000"></div>
<div class="a" style="left:699px;top:636px;width:1px;height:111px;background:#000"></div>
<div class="a" style="left:804px;top:636px;width:1px;height:111px;background:#000"></div>
<div class="a" style="left:856px;top:636px;width:1px;height:111px;background:#000"></div>
<div class="a" style="left:946px;top:636px;width:1px;height:111px;background:#000"></div>
<div class="a" style="left:949px;top:605px;width:1px;height:149px;background:#000"></div>
<div class="a" style="left:12px;top:753px;width:549px;height:1px;background:#d4d0c8"></div><div class="a" style="left:561px;top:753px;width:372px;height:1px;background:repeating-linear-gradient(to right,#d4d0c8 0 2px,#f4f4f4 2px 4px)"></div><div class="a" style="left:933px;top:753px;width:17px;height:1px;background:#d4d0c8"></div>
<div class="a" style="left:946px;top:608px;width:1px;height:27px;background:#a0a0a0"></div>


<!-- status -->

<div class="a" style="left:4px;top:754px;width:952px;height:22px;background:#d4d4d4;border-top:1px solid #f4f4f4"></div>
<div class="t" style="left:8px;top:760px;letter-spacing:-0.33px">Время обновления 25 мс</div><div class="t" style="left:136px;top:760px;letter-spacing:0.08px">Profit=6400,29 Delta(Δ)=-0,01 Gamma(Г)=-0,000203 Vega=-343,22 Theta(Θ)=508,3</div>
<div class="a" style="left:0;top:778px;width:959px;height:1px;background:#808080"></div>
<div class="a" style="left:0;top:779px;width:960px;height:1px;background:#404040"></div>
<div class="a" style="left:951px;top:763px;width:2px;height:2px;background:#808080;box-shadow:1px 1px #fff"></div><div class="a" style="left:947px;top:767px;width:2px;height:2px;background:#808080;box-shadow:1px 1px #fff"></div><div class="a" style="left:951px;top:767px;width:2px;height:2px;background:#808080;box-shadow:1px 1px #fff"></div><div class="a" style="left:943px;top:771px;width:2px;height:2px;background:#808080;box-shadow:1px 1px #fff"></div><div class="a" style="left:947px;top:771px;width:2px;height:2px;background:#808080;box-shadow:1px 1px #fff"></div><div class="a" style="left:951px;top:771px;width:2px;height:2px;background:#808080;box-shadow:1px 1px #fff"></div>
</body></html>
